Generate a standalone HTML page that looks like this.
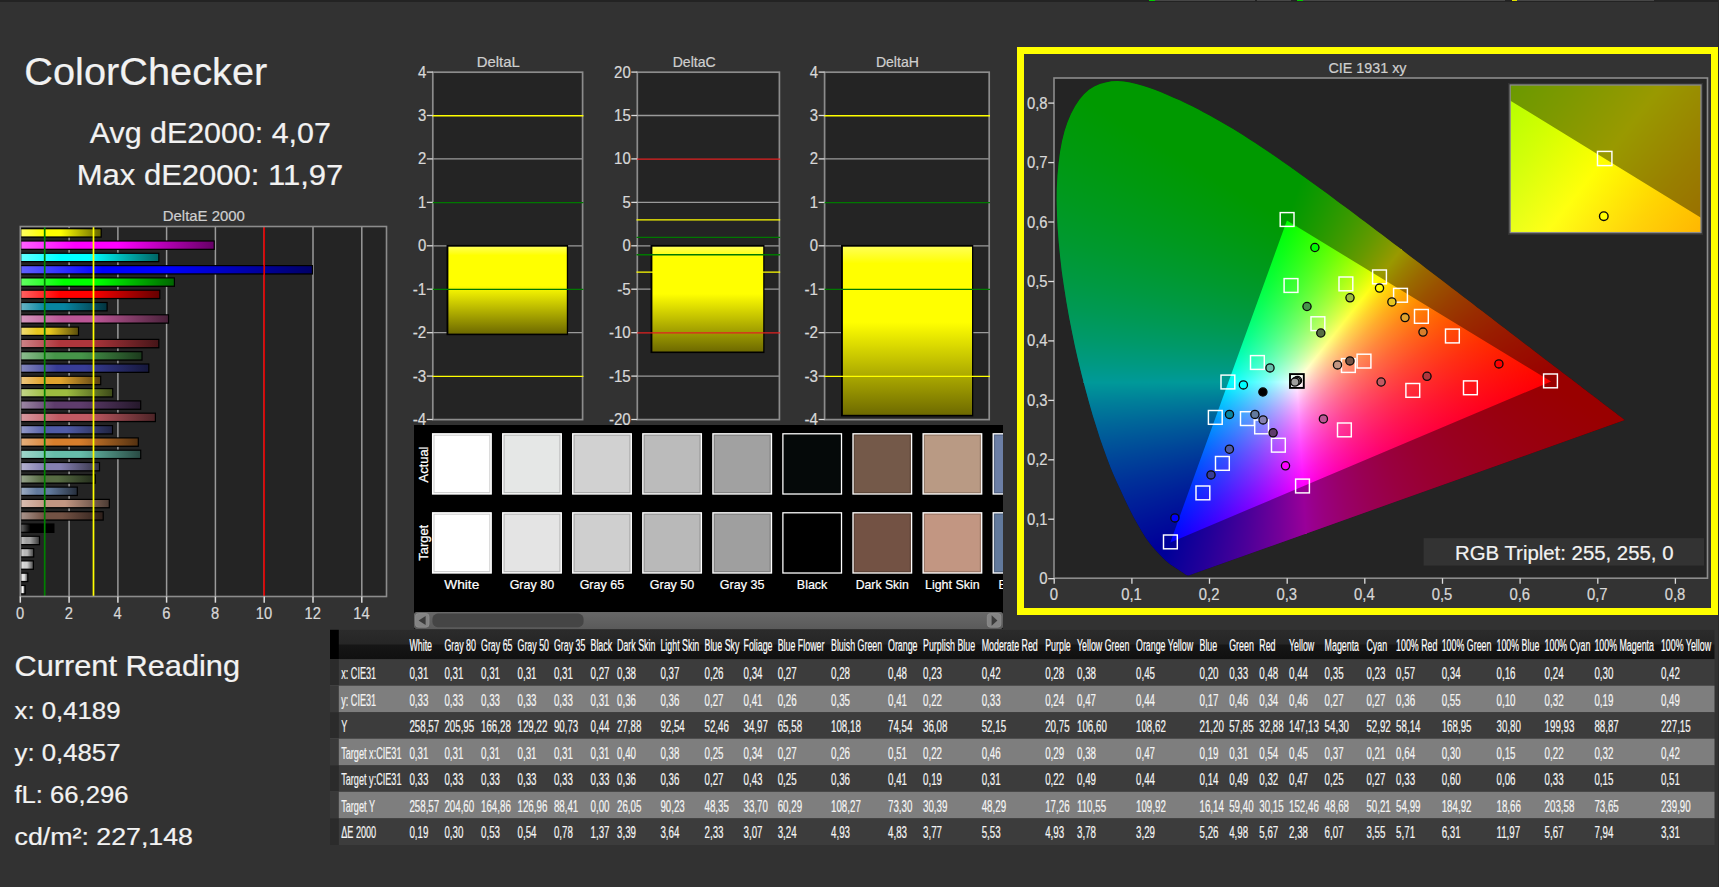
<!DOCTYPE html>
<html lang="en"><head><meta charset="utf-8">
<title>ColorChecker</title>
<style>
html,body{margin:0;padding:0}
body{width:1719px;height:887px;overflow:hidden;position:relative;background:#323232;
 font-family:"Liberation Sans", sans-serif;color:#f2f2f2}
.a{position:absolute}
svg text{font-family:"Liberation Sans", sans-serif;stroke-width:.22px}
</style></head><body>
<div class="a" style="left:0;top:0;width:1719px;height:2px;background:#232323"></div>
<div class="a" style="left:1149px;top:0;width:106px;height:1px;background:#474747"></div>
<div class="a" style="left:1257px;top:0;width:34px;height:1px;background:#474747"></div>
<div class="a" style="left:1297px;top:0;width:208px;height:1px;background:#474747"></div>
<div class="a" style="left:1512px;top:0;width:142px;height:1px;background:#474747"></div>
<div class="a" style="left:1149px;top:0;width:6px;height:1px;background:#00d000"></div>
<div class="a" style="left:1297px;top:0;width:6px;height:1px;background:#00d000"></div>
<div class="a" style="left:1512px;top:0;width:5px;height:1px;background:#e0e000"></div>
<div class="a" style="left:1017px;top:47px;width:701px;height:568px;box-sizing:border-box;border:7px solid #ffff00;background:#333"></div>
<div class="a" style="left:1718px;top:0;width:1px;height:887px;background:#2a2a2a"></div>
<div class="a" style="left:1054.0px;top:78.0px;width:653.5px;height:500.20000000000005px;overflow:hidden;background:#242424">
<div class="a" style="left:0;top:0;width:653.5px;height:500.20000000000005px;clip-path:polygon(135.1px 497.2px,135.0px 497.2px,135.0px 497.2px,135.0px 497.3px,134.9px 497.3px,134.8px 497.3px,134.8px 497.3px,134.7px 497.3px,134.6px 497.3px,134.5px 497.3px,134.5px 497.3px,134.4px 497.3px,134.3px 497.4px,134.2px 497.4px,134.0px 497.4px,133.9px 497.3px,133.8px 497.3px,133.6px 497.3px,133.4px 497.3px,133.2px 497.3px,133.0px 497.2px,132.7px 497.0px,132.3px 496.9px,132.0px 496.7px,131.5px 496.4px,131.0px 496.1px,130.5px 495.7px,129.9px 495.3px,129.2px 494.8px,128.4px 494.3px,127.5px 493.7px,126.6px 493.0px,125.5px 492.4px,124.3px 491.6px,123.0px 490.7px,121.5px 489.7px,119.8px 488.6px,118.1px 487.5px,116.2px 486.2px,114.1px 484.6px,111.7px 482.5px,108.9px 479.8px,105.7px 476.5px,102.4px 472.9px,99.1px 469.3px,96.2px 465.8px,93.8px 462.5px,91.6px 459.4px,89.5px 456.1px,87.3px 452.6px,85.0px 448.5px,82.4px 443.9px,79.6px 438.9px,76.8px 433.5px,73.8px 427.6px,70.7px 421.1px,67.5px 414.1px,64.0px 406.6px,60.4px 398.6px,56.8px 389.9px,53.2px 380.6px,49.6px 370.6px,45.9px 359.9px,42.3px 348.6px,38.6px 336.8px,35.1px 324.4px,31.5px 311.3px,27.9px 297.6px,24.4px 283.3px,21.1px 268.8px,18.1px 254.2px,15.2px 239.5px,12.5px 224.3px,10.1px 209.1px,7.9px 194.0px,6.2px 179.3px,4.8px 164.9px,3.7px 150.6px,3.0px 136.5px,2.7px 122.9px,2.8px 109.9px,3.5px 97.4px,4.6px 85.3px,6.1px 73.8px,8.1px 63.0px,10.6px 53.1px,13.6px 44.1px,17.1px 35.8px,21.1px 28.3px,25.4px 21.8px,30.0px 16.2px,35.0px 11.8px,40.3px 8.5px,45.9px 6.0px,51.7px 4.4px,57.5px 3.3px,63.5px 2.9px,69.7px 3.4px,75.9px 4.6px,82.2px 6.1px,88.5px 7.8px,94.8px 9.7px,101.2px 12.0px,107.5px 14.5px,113.8px 17.2px,120.0px 19.9px,126.1px 22.6px,132.1px 25.4px,138.0px 28.3px,143.9px 31.3px,149.7px 34.4px,155.5px 37.5px,161.2px 40.7px,166.9px 43.9px,172.5px 47.3px,178.2px 50.6px,183.9px 54.1px,189.5px 57.6px,195.1px 61.2px,200.7px 64.8px,206.3px 68.5px,211.9px 72.2px,217.5px 76.0px,223.0px 79.8px,228.6px 83.7px,234.1px 87.6px,239.7px 91.5px,245.2px 95.5px,250.8px 99.5px,256.3px 103.5px,261.9px 107.5px,267.4px 111.6px,273.0px 115.6px,278.6px 119.7px,284.1px 123.9px,289.7px 128.0px,295.2px 132.1px,300.8px 136.3px,306.3px 140.5px,311.8px 144.6px,317.4px 148.8px,322.9px 153.0px,328.4px 157.1px,333.9px 161.3px,339.4px 165.5px,344.9px 169.6px,350.3px 173.7px,355.7px 177.9px,361.1px 182.0px,366.5px 186.1px,371.8px 190.2px,377.1px 194.2px,382.4px 198.2px,387.7px 202.3px,392.9px 206.2px,398.0px 210.2px,403.1px 214.1px,408.2px 218.0px,413.2px 221.8px,418.2px 225.6px,423.1px 229.4px,428.0px 233.1px,432.8px 236.7px,437.5px 240.3px,442.2px 243.9px,446.7px 247.4px,451.2px 250.8px,455.6px 254.2px,459.9px 257.5px,464.2px 260.7px,468.3px 263.9px,472.2px 266.9px,476.1px 269.8px,479.8px 272.7px,483.4px 275.5px,487.0px 278.2px,490.5px 280.9px,493.9px 283.5px,497.2px 286.0px,500.4px 288.4px,503.5px 290.8px,506.4px 293.0px,509.2px 295.2px,512.0px 297.2px,514.6px 299.2px,517.1px 301.1px,519.5px 303.0px,521.9px 304.8px,524.1px 306.5px,526.2px 308.1px,528.2px 309.7px,530.2px 311.2px,532.0px 312.6px,533.8px 313.9px,535.5px 315.2px,537.1px 316.5px,538.6px 317.6px,540.1px 318.8px,541.5px 319.8px,542.9px 320.8px,544.2px 321.8px,545.4px 322.8px,546.6px 323.7px,547.7px 324.5px,548.8px 325.4px,549.8px 326.2px,550.9px 327.0px,551.8px 327.7px,552.8px 328.4px,553.7px 329.1px,554.6px 329.8px,555.4px 330.4px,556.1px 331.0px,556.8px 331.5px,557.6px 332.1px,558.5px 332.8px,559.4px 333.5px,560.5px 334.3px,561.6px 335.1px,562.7px 336.0px,563.9px 336.9px,565.3px 337.9px,566.8px 339.1px,568.4px 340.3px,569.7px 341.4px,570.7px 342.1px);background:#000;isolation:isolate">
<div class="a" style="left:0;top:0;width:653.5px;height:500.20000000000005px;clip-path:polygon(242.8px 305.3px,-3757.1px 314.7px,-1.1px -3687.2px,2719.6px -2835.7px);background:conic-gradient(from 218.26deg at 116.3px 464.4px,rgb(255,0,0) 0.00deg,rgb(255,0,0) 28.75deg,rgb(0,0,0) 29.00deg,rgb(0,0,0) 161.50deg,rgb(15,0,0) 163.25deg,rgb(49,0,0) 166.50deg,rgb(78,0,0) 169.00deg,rgb(110,0,0) 171.50deg,rgb(139,0,0) 173.50deg,rgb(170,0,0) 175.50deg,rgb(210,0,0) 177.75deg,rgb(255,0,0) 180.00deg,rgb(255,0,0) 180.25deg,rgb(255,0,0) 208.75deg,rgb(0,0,0) 209.00deg,rgb(0,0,0) 300.00deg,rgb(1,0,0) 341.75deg,rgb(28,0,0) 344.50deg,rgb(57,0,0) 347.25deg,rgb(87,0,0) 349.75deg,rgb(117,0,0) 352.00deg,rgb(150,0,0) 354.25deg,rgb(183,0,0) 356.25deg,rgb(219,0,0) 358.25deg,rgb(255,0,0) 360.00deg),conic-gradient(from 89.87deg at 497.1px 303.5px,rgb(0,0,255) 0.00deg,rgb(0,0,215) 2.50deg,rgb(0,0,175) 5.50deg,rgb(0,0,140) 8.75deg,rgb(0,0,109) 12.25deg,rgb(0,0,79) 16.25deg,rgb(0,0,51) 20.75deg,rgb(0,0,25) 25.75deg,rgb(0,0,0) 31.50deg,rgb(0,0,0) 157.00deg,rgb(0,0,255) 157.25deg,rgb(0,0,255) 180.00deg,rgb(0,0,215) 182.50deg,rgb(0,0,175) 185.50deg,rgb(0,0,140) 188.75deg,rgb(0,0,109) 192.25deg,rgb(0,0,79) 196.25deg,rgb(0,0,51) 200.75deg,rgb(0,0,25) 205.75deg,rgb(0,0,0) 211.50deg,rgb(0,0,0) 337.00deg,rgb(0,0,255) 337.25deg,rgb(0,0,255) 360.00deg),#0f0;background-blend-mode:screen,screen,normal"></div>
<div class="a" style="left:0;top:0;width:653.5px;height:500.20000000000005px;clip-path:polygon(241.6px 304.1px,2718.3px -2836.9px,4241.6px 294.7px,485.5px 4296.7px);background:conic-gradient(from 218.26deg at 116.3px 464.4px,rgb(0,255,0) 0.00deg,rgb(0,212,0) 2.25deg,rgb(0,170,0) 5.00deg,rgb(0,133,0) 8.00deg,rgb(0,102,0) 11.25deg,rgb(0,72,0) 15.00deg,rgb(0,45,0) 19.25deg,rgb(0,20,0) 24.25deg,rgb(0,0,0) 29.00deg,rgb(0,0,0) 161.50deg,rgb(0,255,0) 161.75deg,rgb(0,255,0) 180.00deg,rgb(0,212,0) 182.25deg,rgb(0,173,0) 184.75deg,rgb(0,136,0) 187.75deg,rgb(0,104,0) 191.00deg,rgb(0,74,0) 194.75deg,rgb(0,48,0) 198.75deg,rgb(0,23,0) 203.50deg,rgb(0,0,0) 208.75deg,rgb(0,0,0) 341.50deg,rgb(0,255,0) 341.75deg,rgb(0,255,0) 360.00deg),conic-gradient(from 356.50deg at 232.9px 142.6px,rgb(0,0,255) 0.00deg,rgb(0,0,255) 23.25deg,rgb(0,0,0) 23.50deg,rgb(0,0,0) 125.00deg,rgb(0,0,28) 136.75deg,rgb(0,0,54) 146.25deg,rgb(0,0,80) 154.25deg,rgb(0,0,108) 161.00deg,rgb(0,0,140) 167.00deg,rgb(0,0,174) 172.00deg,rgb(0,0,211) 176.25deg,rgb(0,0,233) 178.25deg,rgb(0,0,255) 180.00deg,rgb(0,0,255) 203.25deg,rgb(0,0,0) 203.50deg,rgb(0,0,0) 304.75deg,rgb(0,0,26) 316.25deg,rgb(0,0,53) 326.00deg,rgb(0,0,79) 334.00deg,rgb(0,0,107) 340.75deg,rgb(0,0,138) 346.75deg,rgb(0,0,172) 351.75deg,rgb(0,0,190) 354.00deg,rgb(0,0,211) 356.25deg,rgb(0,0,233) 358.25deg,rgb(0,0,255) 360.00deg),#f00;background-blend-mode:screen,screen,normal"></div>
<div class="a" style="left:0;top:0;width:653.5px;height:500.20000000000005px;clip-path:polygon(243.5px 303.2px,487.4px 4295.7px,-2233.2px 3444.2px,-3756.5px 312.5px);background:conic-gradient(from 356.50deg at 232.9px 142.6px,rgb(255,0,0) 0.00deg,rgb(192,0,0) 5.00deg,rgb(129,0,0) 10.50deg,rgb(59,0,0) 17.25deg,rgb(0,0,0) 23.50deg,rgb(0,0,0) 124.75deg,rgb(255,0,0) 125.00deg,rgb(255,0,0) 180.00deg,rgb(192,0,0) 185.00deg,rgb(129,0,0) 190.50deg,rgb(59,0,0) 197.25deg,rgb(0,0,0) 203.50deg,rgb(0,0,0) 301.25deg,rgb(0,0,0) 304.75deg,rgb(255,0,0) 305.00deg,rgb(255,0,0) 360.00deg),conic-gradient(from 89.87deg at 497.1px 303.5px,rgb(0,255,0) 0.00deg,rgb(0,255,0) 31.25deg,rgb(0,0,0) 31.50deg,rgb(0,0,0) 157.25deg,rgb(0,27,0) 160.75deg,rgb(0,55,0) 164.00deg,rgb(0,83,0) 167.00deg,rgb(0,115,0) 170.00deg,rgb(0,144,0) 172.50deg,rgb(0,173,0) 174.75deg,rgb(0,213,0) 177.50deg,rgb(0,255,0) 180.00deg,rgb(0,255,0) 180.25deg,rgb(0,255,0) 211.25deg,rgb(0,0,0) 211.50deg,rgb(0,0,0) 337.25deg,rgb(0,29,0) 341.00deg,rgb(0,57,0) 344.25deg,rgb(0,86,0) 347.25deg,rgb(0,118,0) 350.25deg,rgb(0,150,0) 353.00deg,rgb(0,184,0) 355.50deg,rgb(0,217,0) 357.75deg,rgb(0,255,0) 360.00deg),#00f;background-blend-mode:screen,screen,normal"></div>
<div class="a" style="left:0;top:0;width:653.5px;height:500.20000000000005px;background:rgba(0,0,0,.4);clip-path:path(evenodd,'M-10 -10H663.5V510.20000000000005H-10Z M497.1 303.5 232.9 142.6 116.3 464.4Z')"></div>
</div></div>
<div class="a" style="left:1508.0px;top:82.8px;width:195.20000000000002px;height:152.0px;background:#333"></div>
<div class="a" style="left:1510.2px;top:85.0px;width:190.8px;height:147.6px;overflow:hidden;background:#242424">
<div class="a" style="left:0;top:0;width:190.8px;height:147.6px;background:#000;isolation:isolate">
<div class="a" style="left:0;top:0;width:190.8px;height:147.6px;clip-path:polygon(-312.2px 595.1px,-4312.2px 604.6px,-554.1px -3397.5px,2151.6px -2556.0px);background:conic-gradient(from 218.02deg at -933.1px 1388.0px,rgb(255,0,0) 0.00deg,rgb(255,0,0) 28.75deg,rgb(0,0,0) 29.00deg,rgb(0,0,0) 161.75deg,rgb(54,0,0) 167.00deg,rgb(84,0,0) 169.50deg,rgb(113,0,0) 171.75deg,rgb(142,0,0) 173.75deg,rgb(170,0,0) 175.50deg,rgb(210,0,0) 177.75deg,rgb(255,0,0) 180.00deg,rgb(255,0,0) 180.25deg,rgb(255,0,0) 208.75deg,rgb(0,0,0) 209.00deg,rgb(0,0,0) 341.75deg,rgb(27,0,0) 344.50deg,rgb(57,0,0) 347.25deg,rgb(87,0,0) 349.75deg,rgb(117,0,0) 352.00deg,rgb(150,0,0) 354.25deg,rgb(183,0,0) 356.25deg,rgb(219,0,0) 358.25deg,rgb(255,0,0) 360.00deg),conic-gradient(from 89.86deg at 936.7px 591.0px,rgb(0,0,255) 0.00deg,rgb(0,0,215) 2.50deg,rgb(0,0,175) 5.50deg,rgb(0,0,140) 8.75deg,rgb(0,0,107) 12.50deg,rgb(0,0,78) 16.50deg,rgb(0,0,51) 21.00deg,rgb(0,0,24) 26.25deg,rgb(0,0,0) 31.75deg,rgb(0,0,0) 157.00deg,rgb(0,0,255) 157.25deg,rgb(0,0,255) 180.00deg,rgb(0,0,215) 182.50deg,rgb(0,0,175) 185.50deg,rgb(0,0,140) 188.75deg,rgb(0,0,107) 192.50deg,rgb(0,0,78) 196.50deg,rgb(0,0,51) 201.00deg,rgb(0,0,24) 206.25deg,rgb(0,0,0) 211.75deg,rgb(0,0,0) 337.00deg,rgb(0,0,255) 337.25deg,rgb(0,0,255) 360.00deg),#0f0;background-blend-mode:screen,screen,normal"></div>
<div class="a" style="left:0;top:0;width:190.8px;height:147.6px;clip-path:polygon(-313.5px 593.9px,2150.3px -2557.2px,3686.5px 584.5px,-71.6px 4586.6px);background:conic-gradient(from 218.02deg at -933.1px 1388.0px,rgb(0,255,0) 0.00deg,rgb(0,212,0) 2.25deg,rgb(0,173,0) 4.75deg,rgb(0,136,0) 7.75deg,rgb(0,104,0) 11.00deg,rgb(0,74,0) 14.75deg,rgb(0,47,0) 19.00deg,rgb(0,21,0) 24.00deg,rgb(0,0,0) 29.00deg,rgb(0,0,0) 161.50deg,rgb(0,255,0) 161.75deg,rgb(0,255,0) 180.00deg,rgb(0,212,0) 182.25deg,rgb(0,173,0) 184.75deg,rgb(0,136,0) 187.75deg,rgb(0,104,0) 191.00deg,rgb(0,74,0) 194.75deg,rgb(0,47,0) 199.00deg,rgb(0,21,0) 204.00deg,rgb(0,0,0) 209.00deg,rgb(0,0,0) 341.50deg,rgb(0,255,0) 341.75deg,rgb(0,255,0) 360.00deg),conic-gradient(from 356.53deg at -360.7px -206.1px,rgb(0,0,255) 0.00deg,rgb(0,0,255) 23.00deg,rgb(0,0,0) 23.25deg,rgb(0,0,0) 125.00deg,rgb(0,0,27) 136.75deg,rgb(0,0,53) 146.25deg,rgb(0,0,79) 154.25deg,rgb(0,0,107) 161.00deg,rgb(0,0,139) 167.00deg,rgb(0,0,173) 172.00deg,rgb(0,0,211) 176.25deg,rgb(0,0,233) 178.25deg,rgb(0,0,255) 180.00deg,rgb(0,0,255) 203.00deg,rgb(0,0,0) 203.25deg,rgb(0,0,0) 305.00deg,rgb(0,0,27) 316.75deg,rgb(0,0,53) 326.25deg,rgb(0,0,79) 334.25deg,rgb(0,0,107) 341.00deg,rgb(0,0,139) 347.00deg,rgb(0,0,173) 352.00deg,rgb(0,0,211) 356.25deg,rgb(0,0,233) 358.25deg,rgb(0,0,255) 360.00deg),#f00;background-blend-mode:screen,screen,normal"></div>
<div class="a" style="left:0;top:0;width:190.8px;height:147.6px;clip-path:polygon(-311.5px 593.0px,-69.7px 4585.7px,-2775.3px 3744.2px,-4311.5px 602.4px);background:conic-gradient(from 356.53deg at -360.7px -206.1px,rgb(255,0,0) 0.00deg,rgb(194,0,0) 4.75deg,rgb(131,0,0) 10.25deg,rgb(65,0,0) 16.50deg,rgb(0,0,0) 23.25deg,rgb(0,0,0) 125.00deg,rgb(255,0,0) 125.25deg,rgb(255,0,0) 180.00deg,rgb(194,0,0) 184.75deg,rgb(131,0,0) 190.25deg,rgb(65,0,0) 196.50deg,rgb(0,0,0) 203.25deg,rgb(0,0,0) 305.00deg,rgb(255,0,0) 305.25deg,rgb(255,0,0) 360.00deg),conic-gradient(from 89.86deg at 936.7px 591.0px,rgb(0,255,0) 0.00deg,rgb(0,255,0) 31.50deg,rgb(0,0,0) 31.75deg,rgb(0,0,0) 157.00deg,rgb(0,24,0) 160.25deg,rgb(0,54,0) 163.75deg,rgb(0,82,0) 166.75deg,rgb(0,113,0) 169.75deg,rgb(0,142,0) 172.25deg,rgb(0,174,0) 174.75deg,rgb(0,214,0) 177.50deg,rgb(0,255,0) 180.00deg,rgb(0,255,0) 180.25deg,rgb(0,255,0) 211.50deg,rgb(0,0,0) 211.75deg,rgb(0,0,0) 337.00deg,rgb(0,24,0) 340.25deg,rgb(0,54,0) 343.75deg,rgb(0,84,0) 347.00deg,rgb(0,116,0) 350.00deg,rgb(0,148,0) 352.75deg,rgb(0,181,0) 355.25deg,rgb(0,217,0) 357.75deg,rgb(0,255,0) 360.00deg),#00f;background-blend-mode:screen,screen,normal"></div>
<div class="a" style="left:0;top:0;width:190.8px;height:147.6px;background:rgba(0,0,0,.4);clip-path:path(evenodd,'M-10 -10H200.8V157.6H-10Z M936.7 591.0 -360.7 -206.1 -933.1 1388.0Z')"></div>
</div></div>
<svg class="a" style="left:0;top:0" width="1719" height="887" viewBox="0 0 1719 887">
<text x="24.3" y="84.9" font-size="39.5" fill="#f2f2f2" stroke="#f2f2f2" text-anchor="start" textLength="243.0" lengthAdjust="spacingAndGlyphs">ColorChecker</text>
<text x="89.8" y="143.2" font-size="30.3" fill="#f2f2f2" stroke="#f2f2f2" text-anchor="start" textLength="241.0" lengthAdjust="spacingAndGlyphs">Avg dE2000: 4,07</text>
<text x="76.8" y="185.0" font-size="30.3" fill="#f2f2f2" stroke="#f2f2f2" text-anchor="start" textLength="266.5" lengthAdjust="spacingAndGlyphs">Max dE2000: 11,97</text>
<text x="203.8" y="220.8" font-size="15" fill="#cfcfcf" stroke="#cfcfcf" text-anchor="middle" textLength="82.0" lengthAdjust="spacingAndGlyphs">DeltaE 2000</text>
<text x="14.5" y="675.7" font-size="28.6" fill="#f2f2f2" stroke="#f2f2f2" text-anchor="start" textLength="225.5" lengthAdjust="spacingAndGlyphs">Current Reading</text>
<text x="14.5" y="718.8" font-size="24.4" fill="#f2f2f2" stroke="#f2f2f2" text-anchor="start" textLength="106.0" lengthAdjust="spacingAndGlyphs">x: 0,4189</text>
<text x="14.5" y="760.6" font-size="24.4" fill="#f2f2f2" stroke="#f2f2f2" text-anchor="start" textLength="106.0" lengthAdjust="spacingAndGlyphs">y: 0,4857</text>
<text x="14.5" y="802.8" font-size="24.4" fill="#f2f2f2" stroke="#f2f2f2" text-anchor="start" textLength="114.0" lengthAdjust="spacingAndGlyphs">fL: 66,296</text>
<text x="14.5" y="844.6" font-size="24.4" fill="#f2f2f2" stroke="#f2f2f2" text-anchor="start" textLength="178.5" lengthAdjust="spacingAndGlyphs">cd/m²: 227,148</text>
<defs><linearGradient id="b0"><stop offset="0" stop-color="rgb(255, 255, 255)"/><stop offset=".28" stop-color="rgb(255, 255, 255)"/><stop offset=".5" stop-color="rgb(255, 255, 255)"/><stop offset="1" stop-color="rgb(102, 102, 102)"/></linearGradient><linearGradient id="b1"><stop offset="0" stop-color="rgb(238, 238, 238)"/><stop offset=".28" stop-color="rgb(228, 228, 228)"/><stop offset=".5" stop-color="rgb(228, 228, 228)"/><stop offset="1" stop-color="rgb(91, 91, 91)"/></linearGradient><linearGradient id="b2"><stop offset="0" stop-color="rgb(225, 225, 225)"/><stop offset=".28" stop-color="rgb(207, 207, 207)"/><stop offset=".5" stop-color="rgb(207, 207, 207)"/><stop offset="1" stop-color="rgb(82, 82, 82)"/></linearGradient><linearGradient id="b3"><stop offset="0" stop-color="rgb(211, 211, 211)"/><stop offset=".28" stop-color="rgb(185, 185, 185)"/><stop offset=".5" stop-color="rgb(185, 185, 185)"/><stop offset="1" stop-color="rgb(74, 74, 74)"/></linearGradient><linearGradient id="b4"><stop offset="0" stop-color="rgb(195, 195, 195)"/><stop offset=".28" stop-color="rgb(159, 159, 159)"/><stop offset=".5" stop-color="rgb(159, 159, 159)"/><stop offset="1" stop-color="rgb(63, 63, 63)"/></linearGradient><linearGradient id="b5"><stop offset="0" stop-color="rgb(96, 96, 96)"/><stop offset=".28" stop-color="rgb(0, 0, 0)"/><stop offset=".5" stop-color="rgb(0, 0, 0)"/><stop offset="1" stop-color="rgb(0, 0, 0)"/></linearGradient><linearGradient id="b6"><stop offset="0" stop-color="rgb(168, 147, 139)"/><stop offset=".28" stop-color="rgb(115, 82, 68)"/><stop offset=".5" stop-color="rgb(115, 82, 68)"/><stop offset="1" stop-color="rgb(46, 32, 27)"/></linearGradient><linearGradient id="b7"><stop offset="0" stop-color="rgb(217, 189, 177)"/><stop offset=".28" stop-color="rgb(194, 150, 130)"/><stop offset=".5" stop-color="rgb(194, 150, 130)"/><stop offset="1" stop-color="rgb(77, 60, 52)"/></linearGradient><linearGradient id="b8"><stop offset="0" stop-color="rgb(157, 172, 194)"/><stop offset=".28" stop-color="rgb(98, 122, 157)"/><stop offset=".5" stop-color="rgb(98, 122, 157)"/><stop offset="1" stop-color="rgb(39, 48, 62)"/></linearGradient><linearGradient id="b9"><stop offset="0" stop-color="rgb(150, 163, 138)"/><stop offset=".28" stop-color="rgb(87, 108, 67)"/><stop offset=".5" stop-color="rgb(87, 108, 67)"/><stop offset="1" stop-color="rgb(34, 43, 26)"/></linearGradient><linearGradient id="b10"><stop offset="0" stop-color="rgb(179, 176, 206)"/><stop offset=".28" stop-color="rgb(133, 128, 177)"/><stop offset=".5" stop-color="rgb(133, 128, 177)"/><stop offset="1" stop-color="rgb(53, 51, 70)"/></linearGradient><linearGradient id="b11"><stop offset="0" stop-color="rgb(160, 214, 202)"/><stop offset=".28" stop-color="rgb(103, 189, 170)"/><stop offset=".5" stop-color="rgb(103, 189, 170)"/><stop offset="1" stop-color="rgb(41, 75, 68)"/></linearGradient><linearGradient id="b12"><stop offset="0" stop-color="rgb(229, 175, 124)"/><stop offset=".28" stop-color="rgb(214, 126, 44)"/><stop offset=".5" stop-color="rgb(214, 126, 44)"/><stop offset="1" stop-color="rgb(85, 50, 17)"/></linearGradient><linearGradient id="b13"><stop offset="0" stop-color="rgb(146, 153, 199)"/><stop offset=".28" stop-color="rgb(80, 91, 166)"/><stop offset=".5" stop-color="rgb(80, 91, 166)"/><stop offset="1" stop-color="rgb(32, 36, 66)"/></linearGradient><linearGradient id="b14"><stop offset="0" stop-color="rgb(216, 152, 158)"/><stop offset=".28" stop-color="rgb(193, 90, 99)"/><stop offset=".5" stop-color="rgb(193, 90, 99)"/><stop offset="1" stop-color="rgb(77, 36, 39)"/></linearGradient><linearGradient id="b15"><stop offset="0" stop-color="rgb(155, 134, 163)"/><stop offset=".28" stop-color="rgb(94, 60, 108)"/><stop offset=".5" stop-color="rgb(94, 60, 108)"/><stop offset="1" stop-color="rgb(37, 24, 43)"/></linearGradient><linearGradient id="b16"><stop offset="0" stop-color="rgb(194, 213, 136)"/><stop offset=".28" stop-color="rgb(157, 188, 64)"/><stop offset=".5" stop-color="rgb(157, 188, 64)"/><stop offset="1" stop-color="rgb(62, 75, 25)"/></linearGradient><linearGradient id="b17"><stop offset="0" stop-color="rgb(235, 197, 125)"/><stop offset=".28" stop-color="rgb(224, 163, 46)"/><stop offset=".5" stop-color="rgb(224, 163, 46)"/><stop offset="1" stop-color="rgb(89, 65, 18)"/></linearGradient><linearGradient id="b18"><stop offset="0" stop-color="rgb(131, 134, 189)"/><stop offset=".28" stop-color="rgb(56, 61, 150)"/><stop offset=".5" stop-color="rgb(56, 61, 150)"/><stop offset="1" stop-color="rgb(22, 24, 60)"/></linearGradient><linearGradient id="b19"><stop offset="0" stop-color="rgb(140, 188, 142)"/><stop offset=".28" stop-color="rgb(70, 148, 73)"/><stop offset=".5" stop-color="rgb(70, 148, 73)"/><stop offset="1" stop-color="rgb(28, 59, 29)"/></linearGradient><linearGradient id="b20"><stop offset="0" stop-color="rgb(205, 130, 134)"/><stop offset=".28" stop-color="rgb(175, 54, 60)"/><stop offset=".5" stop-color="rgb(175, 54, 60)"/><stop offset="1" stop-color="rgb(70, 21, 24)"/></linearGradient><linearGradient id="b21"><stop offset="0" stop-color="rgb(240, 220, 116)"/><stop offset=".28" stop-color="rgb(231, 199, 31)"/><stop offset=".5" stop-color="rgb(231, 199, 31)"/><stop offset="1" stop-color="rgb(92, 79, 12)"/></linearGradient><linearGradient id="b22"><stop offset="0" stop-color="rgb(212, 150, 189)"/><stop offset=".28" stop-color="rgb(187, 86, 149)"/><stop offset=".5" stop-color="rgb(187, 86, 149)"/><stop offset="1" stop-color="rgb(74, 34, 59)"/></linearGradient><linearGradient id="b23"><stop offset="0" stop-color="rgb(101, 179, 196)"/><stop offset=".28" stop-color="rgb(8, 133, 161)"/><stop offset=".5" stop-color="rgb(8, 133, 161)"/><stop offset="1" stop-color="rgb(3, 53, 64)"/></linearGradient><linearGradient id="b24"><stop offset="0" stop-color="rgb(255, 96, 96)"/><stop offset=".28" stop-color="rgb(255, 0, 0)"/><stop offset=".5" stop-color="rgb(255, 0, 0)"/><stop offset="1" stop-color="rgb(102, 0, 0)"/></linearGradient><linearGradient id="b25"><stop offset="0" stop-color="rgb(96, 255, 96)"/><stop offset=".28" stop-color="rgb(0, 255, 0)"/><stop offset=".5" stop-color="rgb(0, 255, 0)"/><stop offset="1" stop-color="rgb(0, 102, 0)"/></linearGradient><linearGradient id="b26"><stop offset="0" stop-color="rgb(96, 96, 255)"/><stop offset=".28" stop-color="rgb(0, 0, 255)"/><stop offset=".5" stop-color="rgb(0, 0, 255)"/><stop offset="1" stop-color="rgb(0, 0, 102)"/></linearGradient><linearGradient id="b27"><stop offset="0" stop-color="rgb(96, 255, 255)"/><stop offset=".28" stop-color="rgb(0, 255, 255)"/><stop offset=".5" stop-color="rgb(0, 255, 255)"/><stop offset="1" stop-color="rgb(0, 102, 102)"/></linearGradient><linearGradient id="b28"><stop offset="0" stop-color="rgb(255, 96, 255)"/><stop offset=".28" stop-color="rgb(255, 0, 255)"/><stop offset=".5" stop-color="rgb(255, 0, 255)"/><stop offset="1" stop-color="rgb(102, 0, 102)"/></linearGradient><linearGradient id="b29"><stop offset="0" stop-color="rgb(255, 255, 96)"/><stop offset=".28" stop-color="rgb(255, 255, 0)"/><stop offset=".5" stop-color="rgb(255, 255, 0)"/><stop offset="1" stop-color="rgb(102, 102, 0)"/></linearGradient></defs><rect x="20.3" y="226.5" width="366.2" height="370.0" fill="#242424"/>
<line x1="69.1" y1="226.5" x2="69.1" y2="596.5" stroke="#9a9a9a" stroke-width="1.5"/>
<line x1="117.9" y1="226.5" x2="117.9" y2="596.5" stroke="#9a9a9a" stroke-width="1.5"/>
<line x1="166.6" y1="226.5" x2="166.6" y2="596.5" stroke="#9a9a9a" stroke-width="1.5"/>
<line x1="215.4" y1="226.5" x2="215.4" y2="596.5" stroke="#9a9a9a" stroke-width="1.5"/>
<line x1="264.2" y1="226.5" x2="264.2" y2="596.5" stroke="#9a9a9a" stroke-width="1.5"/>
<line x1="313.0" y1="226.5" x2="313.0" y2="596.5" stroke="#9a9a9a" stroke-width="1.5"/>
<line x1="361.8" y1="226.5" x2="361.8" y2="596.5" stroke="#9a9a9a" stroke-width="1.5"/>
<rect x="20.8" y="584.9" width="4.9" height="9.6" fill="#000"/>
<rect x="21.3" y="586.1" width="3.2" height="7.1" fill="url(#b0)"/>
<rect x="20.8" y="572.6" width="7.6" height="9.6" fill="#000"/>
<rect x="21.3" y="573.8" width="5.9" height="7.1" fill="url(#b1)"/>
<rect x="20.8" y="560.3" width="13.2" height="9.6" fill="#000"/>
<rect x="21.3" y="561.5" width="11.5" height="7.1" fill="url(#b2)"/>
<rect x="20.8" y="548.0" width="13.5" height="9.6" fill="#000"/>
<rect x="21.3" y="549.2" width="11.8" height="7.1" fill="url(#b3)"/>
<rect x="20.8" y="535.7" width="19.3" height="9.6" fill="#000"/>
<rect x="21.3" y="536.9" width="17.6" height="7.1" fill="url(#b4)"/>
<rect x="20.8" y="523.4" width="33.7" height="9.6" fill="#000"/>
<rect x="21.3" y="524.6" width="32.0" height="7.1" fill="url(#b5)"/>
<rect x="20.8" y="511.1" width="83.0" height="9.6" fill="#000"/>
<rect x="21.3" y="512.3" width="81.3" height="7.1" fill="url(#b6)"/>
<rect x="20.8" y="498.8" width="89.1" height="9.6" fill="#000"/>
<rect x="21.3" y="500.0" width="87.4" height="7.1" fill="url(#b7)"/>
<rect x="20.8" y="486.5" width="57.1" height="9.6" fill="#000"/>
<rect x="21.3" y="487.7" width="55.4" height="7.1" fill="url(#b8)"/>
<rect x="20.8" y="474.2" width="75.2" height="9.6" fill="#000"/>
<rect x="21.3" y="475.4" width="73.5" height="7.1" fill="url(#b9)"/>
<rect x="20.8" y="461.9" width="79.3" height="9.6" fill="#000"/>
<rect x="21.3" y="463.1" width="77.6" height="7.1" fill="url(#b10)"/>
<rect x="20.8" y="449.6" width="120.5" height="9.6" fill="#000"/>
<rect x="21.3" y="450.8" width="118.8" height="7.1" fill="url(#b11)"/>
<rect x="20.8" y="437.3" width="118.1" height="9.6" fill="#000"/>
<rect x="21.3" y="438.5" width="116.4" height="7.1" fill="url(#b12)"/>
<rect x="20.8" y="425.0" width="92.3" height="9.6" fill="#000"/>
<rect x="21.3" y="426.2" width="90.6" height="7.1" fill="url(#b13)"/>
<rect x="20.8" y="412.6" width="135.2" height="9.6" fill="#000"/>
<rect x="21.3" y="413.8" width="133.5" height="7.1" fill="url(#b14)"/>
<rect x="20.8" y="400.3" width="120.5" height="9.6" fill="#000"/>
<rect x="21.3" y="401.5" width="118.8" height="7.1" fill="url(#b15)"/>
<rect x="20.8" y="388.0" width="92.5" height="9.6" fill="#000"/>
<rect x="21.3" y="389.2" width="90.8" height="7.1" fill="url(#b16)"/>
<rect x="20.8" y="375.7" width="80.5" height="9.6" fill="#000"/>
<rect x="21.3" y="376.9" width="78.8" height="7.1" fill="url(#b17)"/>
<rect x="20.8" y="363.4" width="128.6" height="9.6" fill="#000"/>
<rect x="21.3" y="364.6" width="126.9" height="7.1" fill="url(#b18)"/>
<rect x="20.8" y="351.1" width="121.8" height="9.6" fill="#000"/>
<rect x="21.3" y="352.3" width="120.1" height="7.1" fill="url(#b19)"/>
<rect x="20.8" y="338.8" width="138.6" height="9.6" fill="#000"/>
<rect x="21.3" y="340.0" width="136.9" height="7.1" fill="url(#b20)"/>
<rect x="20.8" y="326.5" width="58.3" height="9.6" fill="#000"/>
<rect x="21.3" y="327.7" width="56.6" height="7.1" fill="url(#b21)"/>
<rect x="20.8" y="314.2" width="148.3" height="9.6" fill="#000"/>
<rect x="21.3" y="315.4" width="146.6" height="7.1" fill="url(#b22)"/>
<rect x="20.8" y="301.9" width="86.9" height="9.6" fill="#000"/>
<rect x="21.3" y="303.1" width="85.2" height="7.1" fill="url(#b23)"/>
<rect x="20.8" y="289.6" width="139.6" height="9.6" fill="#000"/>
<rect x="21.3" y="290.8" width="137.9" height="7.1" fill="url(#b24)"/>
<rect x="20.8" y="277.3" width="154.2" height="9.6" fill="#000"/>
<rect x="21.3" y="278.5" width="152.5" height="7.1" fill="url(#b25)"/>
<rect x="20.8" y="265.0" width="292.2" height="9.6" fill="#000"/>
<rect x="21.3" y="266.2" width="290.5" height="7.1" fill="url(#b26)"/>
<rect x="20.8" y="252.7" width="138.6" height="9.6" fill="#000"/>
<rect x="21.3" y="253.9" width="136.9" height="7.1" fill="url(#b27)"/>
<rect x="20.8" y="240.4" width="194.0" height="9.6" fill="#000"/>
<rect x="21.3" y="241.6" width="192.3" height="7.1" fill="url(#b28)"/>
<rect x="20.8" y="228.1" width="81.0" height="9.6" fill="#000"/>
<rect x="21.3" y="229.3" width="79.3" height="7.1" fill="url(#b29)"/>
<line x1="44.7" y1="226.5" x2="44.7" y2="596.5" stroke="#008000" stroke-width="1.7"/>
<line x1="93.5" y1="226.5" x2="93.5" y2="596.5" stroke="#ffff00" stroke-width="1.7"/>
<line x1="264.2" y1="226.5" x2="264.2" y2="596.5" stroke="#e00000" stroke-width="1.7"/>
<rect x="20.3" y="226.5" width="366.2" height="370.0" fill="none" stroke="#8c8c8c" stroke-width="1.6"/>
<line x1="20.3" y1="596.5" x2="20.3" y2="602.7" stroke="#ddd" stroke-width="1.5"/>
<text x="20.0" y="619.0" font-size="15.7" fill="#d8d8d8" stroke="#d8d8d8" text-anchor="middle" textLength="8.2" lengthAdjust="spacingAndGlyphs">0</text>
<line x1="69.1" y1="596.5" x2="69.1" y2="602.7" stroke="#ddd" stroke-width="1.5"/>
<text x="68.8" y="619.0" font-size="15.7" fill="#d8d8d8" stroke="#d8d8d8" text-anchor="middle" textLength="8.2" lengthAdjust="spacingAndGlyphs">2</text>
<line x1="117.9" y1="596.5" x2="117.9" y2="602.7" stroke="#ddd" stroke-width="1.5"/>
<text x="117.6" y="619.0" font-size="15.7" fill="#d8d8d8" stroke="#d8d8d8" text-anchor="middle" textLength="8.2" lengthAdjust="spacingAndGlyphs">4</text>
<line x1="166.6" y1="596.5" x2="166.6" y2="602.7" stroke="#ddd" stroke-width="1.5"/>
<text x="166.3" y="619.0" font-size="15.7" fill="#d8d8d8" stroke="#d8d8d8" text-anchor="middle" textLength="8.2" lengthAdjust="spacingAndGlyphs">6</text>
<line x1="215.4" y1="596.5" x2="215.4" y2="602.7" stroke="#ddd" stroke-width="1.5"/>
<text x="215.1" y="619.0" font-size="15.7" fill="#d8d8d8" stroke="#d8d8d8" text-anchor="middle" textLength="8.2" lengthAdjust="spacingAndGlyphs">8</text>
<line x1="264.2" y1="596.5" x2="264.2" y2="602.7" stroke="#ddd" stroke-width="1.5"/>
<text x="263.9" y="619.0" font-size="15.7" fill="#d8d8d8" stroke="#d8d8d8" text-anchor="middle" textLength="16.4" lengthAdjust="spacingAndGlyphs">10</text>
<line x1="313.0" y1="596.5" x2="313.0" y2="602.7" stroke="#ddd" stroke-width="1.5"/>
<text x="312.7" y="619.0" font-size="15.7" fill="#d8d8d8" stroke="#d8d8d8" text-anchor="middle" textLength="16.4" lengthAdjust="spacingAndGlyphs">12</text>
<line x1="361.8" y1="596.5" x2="361.8" y2="602.7" stroke="#ddd" stroke-width="1.5"/>
<text x="361.5" y="619.0" font-size="15.7" fill="#d8d8d8" stroke="#d8d8d8" text-anchor="middle" textLength="16.4" lengthAdjust="spacingAndGlyphs">14</text>
<defs><linearGradient id="yb" x1="0" y1="0" x2="0" y2="1"><stop offset="0" stop-color="#ffff55"/><stop offset=".1" stop-color="#ffff00"/><stop offset=".45" stop-color="#ffff00"/><stop offset="1" stop-color="#6e6a00"/></linearGradient></defs>
<rect x="432.8" y="72.2" width="149.8" height="347.40000000000003" fill="#242424"/>
<line x1="432.8" y1="332.7" x2="582.6" y2="332.7" stroke="#9a9a9a" stroke-width="1.3"/>
<line x1="432.8" y1="245.8" x2="582.6" y2="245.8" stroke="#9a9a9a" stroke-width="1.3"/>
<line x1="432.8" y1="158.9" x2="582.6" y2="158.9" stroke="#9a9a9a" stroke-width="1.3"/>
<rect x="446.5" y="244.9" width="121.6" height="90.3" fill="#000"/>
<rect x="448.4" y="246.7" width="118.4" height="86.9" fill="url(#yb)"/>
<rect x="432.8" y="72.2" width="149.8" height="347.40000000000003" fill="none" stroke="#8c8c8c" stroke-width="1.7"/>
<line x1="432.0" y1="115.7" x2="583.4" y2="115.7" stroke="#ffff00" stroke-width="1.35"/>
<line x1="432.0" y1="202.6" x2="583.4" y2="202.6" stroke="#007800" stroke-width="1.35"/>
<line x1="432.0" y1="289.4" x2="583.4" y2="289.4" stroke="#007800" stroke-width="1.35"/>
<line x1="432.0" y1="376.3" x2="583.4" y2="376.3" stroke="#ffff00" stroke-width="1.35"/>
<line x1="426.8" y1="419.5" x2="432.8" y2="419.5" stroke="#ddd" stroke-width="1.3"/>
<text x="426.2" y="424.9" font-size="15.7" fill="#d8d8d8" stroke="#d8d8d8" text-anchor="end" textLength="13.5" lengthAdjust="spacingAndGlyphs">-4</text>
<line x1="426.8" y1="376.1" x2="432.8" y2="376.1" stroke="#ddd" stroke-width="1.3"/>
<text x="426.2" y="381.5" font-size="15.7" fill="#d8d8d8" stroke="#d8d8d8" text-anchor="end" textLength="13.5" lengthAdjust="spacingAndGlyphs">-3</text>
<line x1="426.8" y1="332.7" x2="432.8" y2="332.7" stroke="#ddd" stroke-width="1.3"/>
<text x="426.2" y="338.1" font-size="15.7" fill="#d8d8d8" stroke="#d8d8d8" text-anchor="end" textLength="13.5" lengthAdjust="spacingAndGlyphs">-2</text>
<line x1="426.8" y1="289.2" x2="432.8" y2="289.2" stroke="#ddd" stroke-width="1.3"/>
<text x="426.2" y="294.6" font-size="15.7" fill="#d8d8d8" stroke="#d8d8d8" text-anchor="end" textLength="13.5" lengthAdjust="spacingAndGlyphs">-1</text>
<line x1="426.8" y1="245.8" x2="432.8" y2="245.8" stroke="#ddd" stroke-width="1.3"/>
<text x="426.2" y="251.2" font-size="15.7" fill="#d8d8d8" stroke="#d8d8d8" text-anchor="end" textLength="8.3" lengthAdjust="spacingAndGlyphs">0</text>
<line x1="426.8" y1="202.4" x2="432.8" y2="202.4" stroke="#ddd" stroke-width="1.3"/>
<text x="426.2" y="207.8" font-size="15.7" fill="#d8d8d8" stroke="#d8d8d8" text-anchor="end" textLength="8.3" lengthAdjust="spacingAndGlyphs">1</text>
<line x1="426.8" y1="158.9" x2="432.8" y2="158.9" stroke="#ddd" stroke-width="1.3"/>
<text x="426.2" y="164.3" font-size="15.7" fill="#d8d8d8" stroke="#d8d8d8" text-anchor="end" textLength="8.3" lengthAdjust="spacingAndGlyphs">2</text>
<line x1="426.8" y1="115.5" x2="432.8" y2="115.5" stroke="#ddd" stroke-width="1.3"/>
<text x="426.2" y="120.9" font-size="15.7" fill="#d8d8d8" stroke="#d8d8d8" text-anchor="end" textLength="8.3" lengthAdjust="spacingAndGlyphs">3</text>
<line x1="426.8" y1="72.1" x2="432.8" y2="72.1" stroke="#ddd" stroke-width="1.3"/>
<text x="426.2" y="77.5" font-size="15.7" fill="#d8d8d8" stroke="#d8d8d8" text-anchor="end" textLength="8.3" lengthAdjust="spacingAndGlyphs">4</text>
<text x="498.3" y="67.0" font-size="15" fill="#cfcfcf" stroke="#cfcfcf" text-anchor="middle" textLength="43.0" lengthAdjust="spacingAndGlyphs">DeltaL</text>
<rect x="637.3" y="72.2" width="142.10000000000002" height="347.40000000000003" fill="#242424"/>
<line x1="637.3" y1="376.1" x2="779.4" y2="376.1" stroke="#9a9a9a" stroke-width="1.3"/>
<line x1="637.3" y1="289.2" x2="779.4" y2="289.2" stroke="#9a9a9a" stroke-width="1.3"/>
<line x1="637.3" y1="245.8" x2="779.4" y2="245.8" stroke="#9a9a9a" stroke-width="1.3"/>
<line x1="637.3" y1="202.4" x2="779.4" y2="202.4" stroke="#9a9a9a" stroke-width="1.3"/>
<line x1="637.3" y1="115.5" x2="779.4" y2="115.5" stroke="#9a9a9a" stroke-width="1.3"/>
<rect x="650.5" y="244.9" width="114.0" height="108.2" fill="#000"/>
<rect x="652.4" y="246.7" width="110.8" height="104.8" fill="url(#yb)"/>
<rect x="637.3" y="72.2" width="142.10000000000002" height="347.40000000000003" fill="none" stroke="#8c8c8c" stroke-width="1.7"/>
<line x1="636.5" y1="159.1" x2="780.1999999999999" y2="159.1" stroke="#e02020" stroke-width="1.35"/>
<line x1="636.5" y1="219.9" x2="780.1999999999999" y2="219.9" stroke="#ffff00" stroke-width="1.35"/>
<line x1="636.5" y1="237.3" x2="780.1999999999999" y2="237.3" stroke="#007800" stroke-width="1.35"/>
<line x1="636.5" y1="254.7" x2="780.1999999999999" y2="254.7" stroke="#007800" stroke-width="1.35"/>
<line x1="636.5" y1="272.1" x2="780.1999999999999" y2="272.1" stroke="#ffff00" stroke-width="1.35"/>
<line x1="636.5" y1="332.9" x2="780.1999999999999" y2="332.9" stroke="#e02020" stroke-width="1.35"/>
<line x1="631.3" y1="419.5" x2="637.3" y2="419.5" stroke="#ddd" stroke-width="1.3"/>
<text x="630.7" y="424.9" font-size="15.7" fill="#d8d8d8" stroke="#d8d8d8" text-anchor="end" textLength="21.8" lengthAdjust="spacingAndGlyphs">-20</text>
<line x1="631.3" y1="376.1" x2="637.3" y2="376.1" stroke="#ddd" stroke-width="1.3"/>
<text x="630.7" y="381.5" font-size="15.7" fill="#d8d8d8" stroke="#d8d8d8" text-anchor="end" textLength="21.8" lengthAdjust="spacingAndGlyphs">-15</text>
<line x1="631.3" y1="332.7" x2="637.3" y2="332.7" stroke="#ddd" stroke-width="1.3"/>
<text x="630.7" y="338.1" font-size="15.7" fill="#d8d8d8" stroke="#d8d8d8" text-anchor="end" textLength="21.8" lengthAdjust="spacingAndGlyphs">-10</text>
<line x1="631.3" y1="289.2" x2="637.3" y2="289.2" stroke="#ddd" stroke-width="1.3"/>
<text x="630.7" y="294.6" font-size="15.7" fill="#d8d8d8" stroke="#d8d8d8" text-anchor="end" textLength="13.5" lengthAdjust="spacingAndGlyphs">-5</text>
<line x1="631.3" y1="245.8" x2="637.3" y2="245.8" stroke="#ddd" stroke-width="1.3"/>
<text x="630.7" y="251.2" font-size="15.7" fill="#d8d8d8" stroke="#d8d8d8" text-anchor="end" textLength="8.3" lengthAdjust="spacingAndGlyphs">0</text>
<line x1="631.3" y1="202.4" x2="637.3" y2="202.4" stroke="#ddd" stroke-width="1.3"/>
<text x="630.7" y="207.8" font-size="15.7" fill="#d8d8d8" stroke="#d8d8d8" text-anchor="end" textLength="8.3" lengthAdjust="spacingAndGlyphs">5</text>
<line x1="631.3" y1="158.9" x2="637.3" y2="158.9" stroke="#ddd" stroke-width="1.3"/>
<text x="630.7" y="164.3" font-size="15.7" fill="#d8d8d8" stroke="#d8d8d8" text-anchor="end" textLength="16.6" lengthAdjust="spacingAndGlyphs">10</text>
<line x1="631.3" y1="115.5" x2="637.3" y2="115.5" stroke="#ddd" stroke-width="1.3"/>
<text x="630.7" y="120.9" font-size="15.7" fill="#d8d8d8" stroke="#d8d8d8" text-anchor="end" textLength="16.6" lengthAdjust="spacingAndGlyphs">15</text>
<line x1="631.3" y1="72.1" x2="637.3" y2="72.1" stroke="#ddd" stroke-width="1.3"/>
<text x="630.7" y="77.5" font-size="15.7" fill="#d8d8d8" stroke="#d8d8d8" text-anchor="end" textLength="16.6" lengthAdjust="spacingAndGlyphs">20</text>
<text x="694.2" y="67.0" font-size="15" fill="#cfcfcf" stroke="#cfcfcf" text-anchor="middle" textLength="43.0" lengthAdjust="spacingAndGlyphs">DeltaC</text>
<rect x="824.6" y="72.2" width="164.60000000000002" height="347.40000000000003" fill="#242424"/>
<line x1="824.6" y1="332.7" x2="989.2" y2="332.7" stroke="#9a9a9a" stroke-width="1.3"/>
<line x1="824.6" y1="245.8" x2="989.2" y2="245.8" stroke="#9a9a9a" stroke-width="1.3"/>
<line x1="824.6" y1="158.9" x2="989.2" y2="158.9" stroke="#9a9a9a" stroke-width="1.3"/>
<rect x="841.0" y="244.9" width="132.3" height="171.5" fill="#000"/>
<rect x="842.9" y="246.7" width="129.1" height="168.1" fill="url(#yb)"/>
<rect x="824.6" y="72.2" width="164.60000000000002" height="347.40000000000003" fill="none" stroke="#8c8c8c" stroke-width="1.7"/>
<line x1="823.8000000000001" y1="115.7" x2="990.0" y2="115.7" stroke="#ffff00" stroke-width="1.35"/>
<line x1="823.8000000000001" y1="202.6" x2="990.0" y2="202.6" stroke="#007800" stroke-width="1.35"/>
<line x1="823.8000000000001" y1="289.4" x2="990.0" y2="289.4" stroke="#007800" stroke-width="1.35"/>
<line x1="823.8000000000001" y1="376.3" x2="990.0" y2="376.3" stroke="#ffff00" stroke-width="1.35"/>
<line x1="818.6" y1="419.5" x2="824.6" y2="419.5" stroke="#ddd" stroke-width="1.3"/>
<text x="818.0" y="424.9" font-size="15.7" fill="#d8d8d8" stroke="#d8d8d8" text-anchor="end" textLength="13.5" lengthAdjust="spacingAndGlyphs">-4</text>
<line x1="818.6" y1="376.1" x2="824.6" y2="376.1" stroke="#ddd" stroke-width="1.3"/>
<text x="818.0" y="381.5" font-size="15.7" fill="#d8d8d8" stroke="#d8d8d8" text-anchor="end" textLength="13.5" lengthAdjust="spacingAndGlyphs">-3</text>
<line x1="818.6" y1="332.7" x2="824.6" y2="332.7" stroke="#ddd" stroke-width="1.3"/>
<text x="818.0" y="338.1" font-size="15.7" fill="#d8d8d8" stroke="#d8d8d8" text-anchor="end" textLength="13.5" lengthAdjust="spacingAndGlyphs">-2</text>
<line x1="818.6" y1="289.2" x2="824.6" y2="289.2" stroke="#ddd" stroke-width="1.3"/>
<text x="818.0" y="294.6" font-size="15.7" fill="#d8d8d8" stroke="#d8d8d8" text-anchor="end" textLength="13.5" lengthAdjust="spacingAndGlyphs">-1</text>
<line x1="818.6" y1="245.8" x2="824.6" y2="245.8" stroke="#ddd" stroke-width="1.3"/>
<text x="818.0" y="251.2" font-size="15.7" fill="#d8d8d8" stroke="#d8d8d8" text-anchor="end" textLength="8.3" lengthAdjust="spacingAndGlyphs">0</text>
<line x1="818.6" y1="202.4" x2="824.6" y2="202.4" stroke="#ddd" stroke-width="1.3"/>
<text x="818.0" y="207.8" font-size="15.7" fill="#d8d8d8" stroke="#d8d8d8" text-anchor="end" textLength="8.3" lengthAdjust="spacingAndGlyphs">1</text>
<line x1="818.6" y1="158.9" x2="824.6" y2="158.9" stroke="#ddd" stroke-width="1.3"/>
<text x="818.0" y="164.3" font-size="15.7" fill="#d8d8d8" stroke="#d8d8d8" text-anchor="end" textLength="8.3" lengthAdjust="spacingAndGlyphs">2</text>
<line x1="818.6" y1="115.5" x2="824.6" y2="115.5" stroke="#ddd" stroke-width="1.3"/>
<text x="818.0" y="120.9" font-size="15.7" fill="#d8d8d8" stroke="#d8d8d8" text-anchor="end" textLength="8.3" lengthAdjust="spacingAndGlyphs">3</text>
<line x1="818.6" y1="72.1" x2="824.6" y2="72.1" stroke="#ddd" stroke-width="1.3"/>
<text x="818.0" y="77.5" font-size="15.7" fill="#d8d8d8" stroke="#d8d8d8" text-anchor="end" textLength="8.3" lengthAdjust="spacingAndGlyphs">4</text>
<text x="897.4" y="67.0" font-size="15" fill="#cfcfcf" stroke="#cfcfcf" text-anchor="middle" textLength="43.0" lengthAdjust="spacingAndGlyphs">DeltaH</text>
<rect x="414.0" y="425.0" width="589.0" height="204.0" fill="#000"/>
<clipPath id="swc"><rect x="414.0" y="425.0" width="589.0" height="204.0"/></clipPath>
<g clip-path="url(#swc)">
<rect x="432.6" y="433.8" width="58.6" height="60.2" fill="#ffffff" stroke="#fff" stroke-width="1.3"/>
<rect x="434.0" y="435.2" width="55.8" height="57.4" fill="none" stroke="#000" stroke-opacity=".2" stroke-width="1"/>
<rect x="432.6" y="512.8" width="58.6" height="60.2" fill="#ffffff" stroke="#fff" stroke-width="1.3"/>
<rect x="434.0" y="514.1999999999999" width="55.8" height="57.4" fill="none" stroke="#000" stroke-opacity=".2" stroke-width="1"/>
<text x="461.8" y="588.9" font-size="13.4" fill="#fff" stroke="#fff" text-anchor="middle" textLength="35.0" lengthAdjust="spacingAndGlyphs">White</text>
<rect x="502.7" y="433.8" width="58.6" height="60.2" fill="#e5e7e6" stroke="#fff" stroke-width="1.3"/>
<rect x="504.1" y="435.2" width="55.8" height="57.4" fill="none" stroke="#000" stroke-opacity=".2" stroke-width="1"/>
<rect x="502.7" y="512.8" width="58.6" height="60.2" fill="#e4e4e4" stroke="#fff" stroke-width="1.3"/>
<rect x="504.1" y="514.1999999999999" width="55.8" height="57.4" fill="none" stroke="#000" stroke-opacity=".2" stroke-width="1"/>
<text x="531.9" y="588.9" font-size="13.4" fill="#fff" stroke="#fff" text-anchor="middle" textLength="44.5" lengthAdjust="spacingAndGlyphs">Gray 80</text>
<rect x="572.7" y="433.8" width="58.6" height="60.2" fill="#d1d1d1" stroke="#fff" stroke-width="1.3"/>
<rect x="574.1" y="435.2" width="55.8" height="57.4" fill="none" stroke="#000" stroke-opacity=".2" stroke-width="1"/>
<rect x="572.7" y="512.8" width="58.6" height="60.2" fill="#cfcfcf" stroke="#fff" stroke-width="1.3"/>
<rect x="574.1" y="514.1999999999999" width="55.8" height="57.4" fill="none" stroke="#000" stroke-opacity=".2" stroke-width="1"/>
<text x="601.9" y="588.9" font-size="13.4" fill="#fff" stroke="#fff" text-anchor="middle" textLength="44.5" lengthAdjust="spacingAndGlyphs">Gray 65</text>
<rect x="642.8" y="433.8" width="58.6" height="60.2" fill="#bbbbbb" stroke="#fff" stroke-width="1.3"/>
<rect x="644.2" y="435.2" width="55.8" height="57.4" fill="none" stroke="#000" stroke-opacity=".2" stroke-width="1"/>
<rect x="642.8" y="512.8" width="58.6" height="60.2" fill="#b9b9b9" stroke="#fff" stroke-width="1.3"/>
<rect x="644.2" y="514.1999999999999" width="55.8" height="57.4" fill="none" stroke="#000" stroke-opacity=".2" stroke-width="1"/>
<text x="672.0" y="588.9" font-size="13.4" fill="#fff" stroke="#fff" text-anchor="middle" textLength="44.5" lengthAdjust="spacingAndGlyphs">Gray 50</text>
<rect x="712.9" y="433.8" width="58.6" height="60.2" fill="#a1a1a1" stroke="#fff" stroke-width="1.3"/>
<rect x="714.3" y="435.2" width="55.8" height="57.4" fill="none" stroke="#000" stroke-opacity=".2" stroke-width="1"/>
<rect x="712.9" y="512.8" width="58.6" height="60.2" fill="#9f9f9f" stroke="#fff" stroke-width="1.3"/>
<rect x="714.3" y="514.1999999999999" width="55.8" height="57.4" fill="none" stroke="#000" stroke-opacity=".2" stroke-width="1"/>
<text x="742.1" y="588.9" font-size="13.4" fill="#fff" stroke="#fff" text-anchor="middle" textLength="44.5" lengthAdjust="spacingAndGlyphs">Gray 35</text>
<rect x="782.9" y="433.8" width="58.6" height="60.2" fill="#050909" stroke="#fff" stroke-width="1.3"/>
<rect x="784.3" y="435.2" width="55.8" height="57.4" fill="none" stroke="#000" stroke-opacity=".2" stroke-width="1"/>
<rect x="782.9" y="512.8" width="58.6" height="60.2" fill="#000000" stroke="#fff" stroke-width="1.3"/>
<rect x="784.3" y="514.1999999999999" width="55.8" height="57.4" fill="none" stroke="#000" stroke-opacity=".2" stroke-width="1"/>
<text x="812.1" y="588.9" font-size="13.4" fill="#fff" stroke="#fff" text-anchor="middle" textLength="30.5" lengthAdjust="spacingAndGlyphs">Black</text>
<rect x="853.0" y="433.8" width="58.6" height="60.2" fill="#745949" stroke="#fff" stroke-width="1.3"/>
<rect x="854.4" y="435.2" width="55.8" height="57.4" fill="none" stroke="#000" stroke-opacity=".2" stroke-width="1"/>
<rect x="853.0" y="512.8" width="58.6" height="60.2" fill="#735244" stroke="#fff" stroke-width="1.3"/>
<rect x="854.4" y="514.1999999999999" width="55.8" height="57.4" fill="none" stroke="#000" stroke-opacity=".2" stroke-width="1"/>
<text x="882.2" y="588.9" font-size="13.4" fill="#fff" stroke="#fff" text-anchor="middle" textLength="53.0" lengthAdjust="spacingAndGlyphs">Dark Skin</text>
<rect x="923.1" y="433.8" width="58.6" height="60.2" fill="#b99a84" stroke="#fff" stroke-width="1.3"/>
<rect x="924.5" y="435.2" width="55.8" height="57.4" fill="none" stroke="#000" stroke-opacity=".2" stroke-width="1"/>
<rect x="923.1" y="512.8" width="58.6" height="60.2" fill="#c29682" stroke="#fff" stroke-width="1.3"/>
<rect x="924.5" y="514.1999999999999" width="55.8" height="57.4" fill="none" stroke="#000" stroke-opacity=".2" stroke-width="1"/>
<text x="952.3" y="588.9" font-size="13.4" fill="#fff" stroke="#fff" text-anchor="middle" textLength="54.5" lengthAdjust="spacingAndGlyphs">Light Skin</text>
<rect x="993.2" y="433.8" width="58.6" height="60.2" fill="#6c7fa6" stroke="#fff" stroke-width="1.3"/>
<rect x="994.6" y="435.2" width="55.8" height="57.4" fill="none" stroke="#000" stroke-opacity=".2" stroke-width="1"/>
<rect x="993.2" y="512.8" width="58.6" height="60.2" fill="#627a9d" stroke="#fff" stroke-width="1.3"/>
<rect x="994.6" y="514.1999999999999" width="55.8" height="57.4" fill="none" stroke="#000" stroke-opacity=".2" stroke-width="1"/>
<text x="1022.4" y="588.9" font-size="13.4" fill="#fff" stroke="#fff" text-anchor="middle" textLength="48.0" lengthAdjust="spacingAndGlyphs">Blue Sky</text>
</g>
<text transform="translate(428.2,464.5) rotate(-90)" font-size="13.4" fill="#fff" stroke="#fff" text-anchor="middle" textLength="36" lengthAdjust="spacingAndGlyphs">Actual</text>
<text transform="translate(428.2,542.8) rotate(-90)" font-size="13.4" fill="#fff" stroke="#fff" text-anchor="middle" textLength="36" lengthAdjust="spacingAndGlyphs">Target</text>
<defs><linearGradient id="sbt" x1="0" y1="0" x2="0" y2="1"><stop offset="0" stop-color="#686868"/><stop offset="1" stop-color="#5a5a5a"/></linearGradient></defs>
<rect x="414.0" y="612" width="589.0" height="17" rx="2.5" fill="url(#sbt)"/>
<rect x="432.4" y="613.6" width="151.2" height="13.6" rx="5.5" fill="#454545"/>
<rect x="415.4" y="613.6" width="13.6" height="13.6" rx="3" fill="#838383" stroke="#8f8f8f" stroke-width=".8"/>
<polygon points="425.6,616 425.6,625 418.6,620.5" fill="#3a3a3a"/>
<rect x="987.3" y="613.6" width="13.6" height="13.6" rx="3" fill="#838383" stroke="#8f8f8f" stroke-width=".8"/>
<polygon points="991.6,615.2 991.6,625.8 997.4,620.5" fill="#3a3a3a"/>
<defs><linearGradient id="thd" x1="0" y1="0" x2="0" y2="1"><stop offset="0" stop-color="#2b2b2b"/><stop offset=".48" stop-color="#262626"/><stop offset=".52" stop-color="#161616"/><stop offset="1" stop-color="#101010"/></linearGradient></defs>
<rect x="330.0" y="629.8" width="1384.5" height="29.40000000000009" fill="url(#thd)"/>
<rect x="330.0" y="629.8" width="8.8" height="29.40000000000009" fill="#000"/>
<text transform="translate(409.4,650.6) scale(0.568,1)" font-size="15.6" fill="#fff" stroke="#fff">White</text>
<text transform="translate(444.4,650.6) scale(0.568,1)" font-size="15.6" fill="#fff" stroke="#fff">Gray 80</text>
<text transform="translate(481.0,650.6) scale(0.568,1)" font-size="15.6" fill="#fff" stroke="#fff">Gray 65</text>
<text transform="translate(517.5,650.6) scale(0.568,1)" font-size="15.6" fill="#fff" stroke="#fff">Gray 50</text>
<text transform="translate(553.9,650.6) scale(0.568,1)" font-size="15.6" fill="#fff" stroke="#fff">Gray 35</text>
<text transform="translate(590.5,650.6) scale(0.568,1)" font-size="15.6" fill="#fff" stroke="#fff">Black</text>
<text transform="translate(617.0,650.6) scale(0.568,1)" font-size="15.6" fill="#fff" stroke="#fff">Dark Skin</text>
<text transform="translate(660.4,650.6) scale(0.568,1)" font-size="15.6" fill="#fff" stroke="#fff">Light Skin</text>
<text transform="translate(704.5,650.6) scale(0.568,1)" font-size="15.6" fill="#fff" stroke="#fff">Blue Sky</text>
<text transform="translate(743.5,650.6) scale(0.568,1)" font-size="15.6" fill="#fff" stroke="#fff">Foliage</text>
<text transform="translate(777.7,650.6) scale(0.568,1)" font-size="15.6" fill="#fff" stroke="#fff">Blue Flower</text>
<text transform="translate(831.0,650.6) scale(0.568,1)" font-size="15.6" fill="#fff" stroke="#fff">Bluish Green</text>
<text transform="translate(888.0,650.6) scale(0.568,1)" font-size="15.6" fill="#fff" stroke="#fff">Orange</text>
<text transform="translate(923.0,650.6) scale(0.568,1)" font-size="15.6" fill="#fff" stroke="#fff">Purplish Blue</text>
<text transform="translate(981.7,650.6) scale(0.568,1)" font-size="15.6" fill="#fff" stroke="#fff">Moderate Red</text>
<text transform="translate(1045.2,650.6) scale(0.568,1)" font-size="15.6" fill="#fff" stroke="#fff">Purple</text>
<text transform="translate(1077.0,650.6) scale(0.568,1)" font-size="15.6" fill="#fff" stroke="#fff">Yellow Green</text>
<text transform="translate(1136.0,650.6) scale(0.568,1)" font-size="15.6" fill="#fff" stroke="#fff">Orange Yellow</text>
<text transform="translate(1199.5,650.6) scale(0.568,1)" font-size="15.6" fill="#fff" stroke="#fff">Blue</text>
<text transform="translate(1229.2,650.6) scale(0.568,1)" font-size="15.6" fill="#fff" stroke="#fff">Green</text>
<text transform="translate(1259.3,650.6) scale(0.568,1)" font-size="15.6" fill="#fff" stroke="#fff">Red</text>
<text transform="translate(1289.0,650.6) scale(0.568,1)" font-size="15.6" fill="#fff" stroke="#fff">Yellow</text>
<text transform="translate(1324.6,650.6) scale(0.568,1)" font-size="15.6" fill="#fff" stroke="#fff">Magenta</text>
<text transform="translate(1366.4,650.6) scale(0.568,1)" font-size="15.6" fill="#fff" stroke="#fff">Cyan</text>
<text transform="translate(1396.1,650.6) scale(0.568,1)" font-size="15.6" fill="#fff" stroke="#fff">100% Red</text>
<text transform="translate(1441.7,650.6) scale(0.568,1)" font-size="15.6" fill="#fff" stroke="#fff">100% Green</text>
<text transform="translate(1496.5,650.6) scale(0.568,1)" font-size="15.6" fill="#fff" stroke="#fff">100% Blue</text>
<text transform="translate(1544.6,650.6) scale(0.568,1)" font-size="15.6" fill="#fff" stroke="#fff">100% Cyan</text>
<text transform="translate(1594.4,650.6) scale(0.568,1)" font-size="15.6" fill="#fff" stroke="#fff">100% Magenta</text>
<text transform="translate(1660.9,650.6) scale(0.568,1)" font-size="15.6" fill="#fff" stroke="#fff">100% Yellow</text>
<rect x="330.0" y="659.2" width="1384.5" height="26.7" fill="#3c3c3c"/>
<rect x="330.0" y="659.2" width="8.8" height="26.7" fill="#2b2b2b"/>
<text transform="translate(341.2,679.2) scale(0.585,1)" font-size="15.6" fill="#f4f4f4" stroke="#f4f4f4">x: CIE31</text>
<text transform="translate(409.4,679.2) scale(0.625,1)" font-size="15.6" fill="#f4f4f4" stroke="#f4f4f4">0,31</text>
<text transform="translate(444.4,679.2) scale(0.625,1)" font-size="15.6" fill="#f4f4f4" stroke="#f4f4f4">0,31</text>
<text transform="translate(481.0,679.2) scale(0.625,1)" font-size="15.6" fill="#f4f4f4" stroke="#f4f4f4">0,31</text>
<text transform="translate(517.5,679.2) scale(0.625,1)" font-size="15.6" fill="#f4f4f4" stroke="#f4f4f4">0,31</text>
<text transform="translate(553.9,679.2) scale(0.625,1)" font-size="15.6" fill="#f4f4f4" stroke="#f4f4f4">0,31</text>
<text transform="translate(590.5,679.2) scale(0.625,1)" font-size="15.6" fill="#f4f4f4" stroke="#f4f4f4">0,27</text>
<text transform="translate(617.0,679.2) scale(0.625,1)" font-size="15.6" fill="#f4f4f4" stroke="#f4f4f4">0,38</text>
<text transform="translate(660.4,679.2) scale(0.625,1)" font-size="15.6" fill="#f4f4f4" stroke="#f4f4f4">0,37</text>
<text transform="translate(704.5,679.2) scale(0.625,1)" font-size="15.6" fill="#f4f4f4" stroke="#f4f4f4">0,26</text>
<text transform="translate(743.5,679.2) scale(0.625,1)" font-size="15.6" fill="#f4f4f4" stroke="#f4f4f4">0,34</text>
<text transform="translate(777.7,679.2) scale(0.625,1)" font-size="15.6" fill="#f4f4f4" stroke="#f4f4f4">0,27</text>
<text transform="translate(831.0,679.2) scale(0.625,1)" font-size="15.6" fill="#f4f4f4" stroke="#f4f4f4">0,28</text>
<text transform="translate(888.0,679.2) scale(0.625,1)" font-size="15.6" fill="#f4f4f4" stroke="#f4f4f4">0,48</text>
<text transform="translate(923.0,679.2) scale(0.625,1)" font-size="15.6" fill="#f4f4f4" stroke="#f4f4f4">0,23</text>
<text transform="translate(981.7,679.2) scale(0.625,1)" font-size="15.6" fill="#f4f4f4" stroke="#f4f4f4">0,42</text>
<text transform="translate(1045.2,679.2) scale(0.625,1)" font-size="15.6" fill="#f4f4f4" stroke="#f4f4f4">0,28</text>
<text transform="translate(1077.0,679.2) scale(0.625,1)" font-size="15.6" fill="#f4f4f4" stroke="#f4f4f4">0,38</text>
<text transform="translate(1136.0,679.2) scale(0.625,1)" font-size="15.6" fill="#f4f4f4" stroke="#f4f4f4">0,45</text>
<text transform="translate(1199.5,679.2) scale(0.625,1)" font-size="15.6" fill="#f4f4f4" stroke="#f4f4f4">0,20</text>
<text transform="translate(1229.2,679.2) scale(0.625,1)" font-size="15.6" fill="#f4f4f4" stroke="#f4f4f4">0,33</text>
<text transform="translate(1259.3,679.2) scale(0.625,1)" font-size="15.6" fill="#f4f4f4" stroke="#f4f4f4">0,48</text>
<text transform="translate(1289.0,679.2) scale(0.625,1)" font-size="15.6" fill="#f4f4f4" stroke="#f4f4f4">0,44</text>
<text transform="translate(1324.6,679.2) scale(0.625,1)" font-size="15.6" fill="#f4f4f4" stroke="#f4f4f4">0,35</text>
<text transform="translate(1366.4,679.2) scale(0.625,1)" font-size="15.6" fill="#f4f4f4" stroke="#f4f4f4">0,23</text>
<text transform="translate(1396.1,679.2) scale(0.625,1)" font-size="15.6" fill="#f4f4f4" stroke="#f4f4f4">0,57</text>
<text transform="translate(1441.7,679.2) scale(0.625,1)" font-size="15.6" fill="#f4f4f4" stroke="#f4f4f4">0,34</text>
<text transform="translate(1496.5,679.2) scale(0.625,1)" font-size="15.6" fill="#f4f4f4" stroke="#f4f4f4">0,16</text>
<text transform="translate(1544.6,679.2) scale(0.625,1)" font-size="15.6" fill="#f4f4f4" stroke="#f4f4f4">0,24</text>
<text transform="translate(1594.4,679.2) scale(0.625,1)" font-size="15.6" fill="#f4f4f4" stroke="#f4f4f4">0,30</text>
<text transform="translate(1660.9,679.2) scale(0.625,1)" font-size="15.6" fill="#f4f4f4" stroke="#f4f4f4">0,42</text>
<rect x="330.0" y="685.7" width="1384.5" height="26.7" fill="#7e7e7e"/>
<rect x="330.0" y="685.7" width="8.8" height="26.7" fill="#393939"/>
<text transform="translate(341.2,705.7) scale(0.585,1)" font-size="15.6" fill="#f4f4f4" stroke="#f4f4f4">y: CIE31</text>
<text transform="translate(409.4,705.7) scale(0.625,1)" font-size="15.6" fill="#f4f4f4" stroke="#f4f4f4">0,33</text>
<text transform="translate(444.4,705.7) scale(0.625,1)" font-size="15.6" fill="#f4f4f4" stroke="#f4f4f4">0,33</text>
<text transform="translate(481.0,705.7) scale(0.625,1)" font-size="15.6" fill="#f4f4f4" stroke="#f4f4f4">0,33</text>
<text transform="translate(517.5,705.7) scale(0.625,1)" font-size="15.6" fill="#f4f4f4" stroke="#f4f4f4">0,33</text>
<text transform="translate(553.9,705.7) scale(0.625,1)" font-size="15.6" fill="#f4f4f4" stroke="#f4f4f4">0,33</text>
<text transform="translate(590.5,705.7) scale(0.625,1)" font-size="15.6" fill="#f4f4f4" stroke="#f4f4f4">0,31</text>
<text transform="translate(617.0,705.7) scale(0.625,1)" font-size="15.6" fill="#f4f4f4" stroke="#f4f4f4">0,36</text>
<text transform="translate(660.4,705.7) scale(0.625,1)" font-size="15.6" fill="#f4f4f4" stroke="#f4f4f4">0,36</text>
<text transform="translate(704.5,705.7) scale(0.625,1)" font-size="15.6" fill="#f4f4f4" stroke="#f4f4f4">0,27</text>
<text transform="translate(743.5,705.7) scale(0.625,1)" font-size="15.6" fill="#f4f4f4" stroke="#f4f4f4">0,41</text>
<text transform="translate(777.7,705.7) scale(0.625,1)" font-size="15.6" fill="#f4f4f4" stroke="#f4f4f4">0,26</text>
<text transform="translate(831.0,705.7) scale(0.625,1)" font-size="15.6" fill="#f4f4f4" stroke="#f4f4f4">0,35</text>
<text transform="translate(888.0,705.7) scale(0.625,1)" font-size="15.6" fill="#f4f4f4" stroke="#f4f4f4">0,41</text>
<text transform="translate(923.0,705.7) scale(0.625,1)" font-size="15.6" fill="#f4f4f4" stroke="#f4f4f4">0,22</text>
<text transform="translate(981.7,705.7) scale(0.625,1)" font-size="15.6" fill="#f4f4f4" stroke="#f4f4f4">0,33</text>
<text transform="translate(1045.2,705.7) scale(0.625,1)" font-size="15.6" fill="#f4f4f4" stroke="#f4f4f4">0,24</text>
<text transform="translate(1077.0,705.7) scale(0.625,1)" font-size="15.6" fill="#f4f4f4" stroke="#f4f4f4">0,47</text>
<text transform="translate(1136.0,705.7) scale(0.625,1)" font-size="15.6" fill="#f4f4f4" stroke="#f4f4f4">0,44</text>
<text transform="translate(1199.5,705.7) scale(0.625,1)" font-size="15.6" fill="#f4f4f4" stroke="#f4f4f4">0,17</text>
<text transform="translate(1229.2,705.7) scale(0.625,1)" font-size="15.6" fill="#f4f4f4" stroke="#f4f4f4">0,46</text>
<text transform="translate(1259.3,705.7) scale(0.625,1)" font-size="15.6" fill="#f4f4f4" stroke="#f4f4f4">0,34</text>
<text transform="translate(1289.0,705.7) scale(0.625,1)" font-size="15.6" fill="#f4f4f4" stroke="#f4f4f4">0,46</text>
<text transform="translate(1324.6,705.7) scale(0.625,1)" font-size="15.6" fill="#f4f4f4" stroke="#f4f4f4">0,27</text>
<text transform="translate(1366.4,705.7) scale(0.625,1)" font-size="15.6" fill="#f4f4f4" stroke="#f4f4f4">0,27</text>
<text transform="translate(1396.1,705.7) scale(0.625,1)" font-size="15.6" fill="#f4f4f4" stroke="#f4f4f4">0,36</text>
<text transform="translate(1441.7,705.7) scale(0.625,1)" font-size="15.6" fill="#f4f4f4" stroke="#f4f4f4">0,55</text>
<text transform="translate(1496.5,705.7) scale(0.625,1)" font-size="15.6" fill="#f4f4f4" stroke="#f4f4f4">0,10</text>
<text transform="translate(1544.6,705.7) scale(0.625,1)" font-size="15.6" fill="#f4f4f4" stroke="#f4f4f4">0,32</text>
<text transform="translate(1594.4,705.7) scale(0.625,1)" font-size="15.6" fill="#f4f4f4" stroke="#f4f4f4">0,19</text>
<text transform="translate(1660.9,705.7) scale(0.625,1)" font-size="15.6" fill="#f4f4f4" stroke="#f4f4f4">0,49</text>
<rect x="330.0" y="712.2" width="1384.5" height="26.7" fill="#3c3c3c"/>
<rect x="330.0" y="712.2" width="8.8" height="26.7" fill="#2b2b2b"/>
<text transform="translate(341.2,732.2) scale(0.585,1)" font-size="15.6" fill="#f4f4f4" stroke="#f4f4f4">Y</text>
<text transform="translate(409.4,732.2) scale(0.625,1)" font-size="15.6" fill="#f4f4f4" stroke="#f4f4f4">258,57</text>
<text transform="translate(444.4,732.2) scale(0.625,1)" font-size="15.6" fill="#f4f4f4" stroke="#f4f4f4">205,95</text>
<text transform="translate(481.0,732.2) scale(0.625,1)" font-size="15.6" fill="#f4f4f4" stroke="#f4f4f4">166,28</text>
<text transform="translate(517.5,732.2) scale(0.625,1)" font-size="15.6" fill="#f4f4f4" stroke="#f4f4f4">129,22</text>
<text transform="translate(553.9,732.2) scale(0.625,1)" font-size="15.6" fill="#f4f4f4" stroke="#f4f4f4">90,73</text>
<text transform="translate(590.5,732.2) scale(0.625,1)" font-size="15.6" fill="#f4f4f4" stroke="#f4f4f4">0,44</text>
<text transform="translate(617.0,732.2) scale(0.625,1)" font-size="15.6" fill="#f4f4f4" stroke="#f4f4f4">27,88</text>
<text transform="translate(660.4,732.2) scale(0.625,1)" font-size="15.6" fill="#f4f4f4" stroke="#f4f4f4">92,54</text>
<text transform="translate(704.5,732.2) scale(0.625,1)" font-size="15.6" fill="#f4f4f4" stroke="#f4f4f4">52,46</text>
<text transform="translate(743.5,732.2) scale(0.625,1)" font-size="15.6" fill="#f4f4f4" stroke="#f4f4f4">34,97</text>
<text transform="translate(777.7,732.2) scale(0.625,1)" font-size="15.6" fill="#f4f4f4" stroke="#f4f4f4">65,58</text>
<text transform="translate(831.0,732.2) scale(0.625,1)" font-size="15.6" fill="#f4f4f4" stroke="#f4f4f4">108,18</text>
<text transform="translate(888.0,732.2) scale(0.625,1)" font-size="15.6" fill="#f4f4f4" stroke="#f4f4f4">74,54</text>
<text transform="translate(923.0,732.2) scale(0.625,1)" font-size="15.6" fill="#f4f4f4" stroke="#f4f4f4">36,08</text>
<text transform="translate(981.7,732.2) scale(0.625,1)" font-size="15.6" fill="#f4f4f4" stroke="#f4f4f4">52,15</text>
<text transform="translate(1045.2,732.2) scale(0.625,1)" font-size="15.6" fill="#f4f4f4" stroke="#f4f4f4">20,75</text>
<text transform="translate(1077.0,732.2) scale(0.625,1)" font-size="15.6" fill="#f4f4f4" stroke="#f4f4f4">106,60</text>
<text transform="translate(1136.0,732.2) scale(0.625,1)" font-size="15.6" fill="#f4f4f4" stroke="#f4f4f4">108,62</text>
<text transform="translate(1199.5,732.2) scale(0.625,1)" font-size="15.6" fill="#f4f4f4" stroke="#f4f4f4">21,20</text>
<text transform="translate(1229.2,732.2) scale(0.625,1)" font-size="15.6" fill="#f4f4f4" stroke="#f4f4f4">57,85</text>
<text transform="translate(1259.3,732.2) scale(0.625,1)" font-size="15.6" fill="#f4f4f4" stroke="#f4f4f4">32,88</text>
<text transform="translate(1289.0,732.2) scale(0.625,1)" font-size="15.6" fill="#f4f4f4" stroke="#f4f4f4">147,13</text>
<text transform="translate(1324.6,732.2) scale(0.625,1)" font-size="15.6" fill="#f4f4f4" stroke="#f4f4f4">54,30</text>
<text transform="translate(1366.4,732.2) scale(0.625,1)" font-size="15.6" fill="#f4f4f4" stroke="#f4f4f4">52,92</text>
<text transform="translate(1396.1,732.2) scale(0.625,1)" font-size="15.6" fill="#f4f4f4" stroke="#f4f4f4">58,14</text>
<text transform="translate(1441.7,732.2) scale(0.625,1)" font-size="15.6" fill="#f4f4f4" stroke="#f4f4f4">168,95</text>
<text transform="translate(1496.5,732.2) scale(0.625,1)" font-size="15.6" fill="#f4f4f4" stroke="#f4f4f4">30,80</text>
<text transform="translate(1544.6,732.2) scale(0.625,1)" font-size="15.6" fill="#f4f4f4" stroke="#f4f4f4">199,93</text>
<text transform="translate(1594.4,732.2) scale(0.625,1)" font-size="15.6" fill="#f4f4f4" stroke="#f4f4f4">88,87</text>
<text transform="translate(1660.9,732.2) scale(0.625,1)" font-size="15.6" fill="#f4f4f4" stroke="#f4f4f4">227,15</text>
<rect x="330.0" y="738.7" width="1384.5" height="26.7" fill="#7e7e7e"/>
<rect x="330.0" y="738.7" width="8.8" height="26.7" fill="#393939"/>
<text transform="translate(341.2,758.7) scale(0.585,1)" font-size="15.6" fill="#f4f4f4" stroke="#f4f4f4">Target x:CIE31</text>
<text transform="translate(409.4,758.7) scale(0.625,1)" font-size="15.6" fill="#f4f4f4" stroke="#f4f4f4">0,31</text>
<text transform="translate(444.4,758.7) scale(0.625,1)" font-size="15.6" fill="#f4f4f4" stroke="#f4f4f4">0,31</text>
<text transform="translate(481.0,758.7) scale(0.625,1)" font-size="15.6" fill="#f4f4f4" stroke="#f4f4f4">0,31</text>
<text transform="translate(517.5,758.7) scale(0.625,1)" font-size="15.6" fill="#f4f4f4" stroke="#f4f4f4">0,31</text>
<text transform="translate(553.9,758.7) scale(0.625,1)" font-size="15.6" fill="#f4f4f4" stroke="#f4f4f4">0,31</text>
<text transform="translate(590.5,758.7) scale(0.625,1)" font-size="15.6" fill="#f4f4f4" stroke="#f4f4f4">0,31</text>
<text transform="translate(617.0,758.7) scale(0.625,1)" font-size="15.6" fill="#f4f4f4" stroke="#f4f4f4">0,40</text>
<text transform="translate(660.4,758.7) scale(0.625,1)" font-size="15.6" fill="#f4f4f4" stroke="#f4f4f4">0,38</text>
<text transform="translate(704.5,758.7) scale(0.625,1)" font-size="15.6" fill="#f4f4f4" stroke="#f4f4f4">0,25</text>
<text transform="translate(743.5,758.7) scale(0.625,1)" font-size="15.6" fill="#f4f4f4" stroke="#f4f4f4">0,34</text>
<text transform="translate(777.7,758.7) scale(0.625,1)" font-size="15.6" fill="#f4f4f4" stroke="#f4f4f4">0,27</text>
<text transform="translate(831.0,758.7) scale(0.625,1)" font-size="15.6" fill="#f4f4f4" stroke="#f4f4f4">0,26</text>
<text transform="translate(888.0,758.7) scale(0.625,1)" font-size="15.6" fill="#f4f4f4" stroke="#f4f4f4">0,51</text>
<text transform="translate(923.0,758.7) scale(0.625,1)" font-size="15.6" fill="#f4f4f4" stroke="#f4f4f4">0,22</text>
<text transform="translate(981.7,758.7) scale(0.625,1)" font-size="15.6" fill="#f4f4f4" stroke="#f4f4f4">0,46</text>
<text transform="translate(1045.2,758.7) scale(0.625,1)" font-size="15.6" fill="#f4f4f4" stroke="#f4f4f4">0,29</text>
<text transform="translate(1077.0,758.7) scale(0.625,1)" font-size="15.6" fill="#f4f4f4" stroke="#f4f4f4">0,38</text>
<text transform="translate(1136.0,758.7) scale(0.625,1)" font-size="15.6" fill="#f4f4f4" stroke="#f4f4f4">0,47</text>
<text transform="translate(1199.5,758.7) scale(0.625,1)" font-size="15.6" fill="#f4f4f4" stroke="#f4f4f4">0,19</text>
<text transform="translate(1229.2,758.7) scale(0.625,1)" font-size="15.6" fill="#f4f4f4" stroke="#f4f4f4">0,31</text>
<text transform="translate(1259.3,758.7) scale(0.625,1)" font-size="15.6" fill="#f4f4f4" stroke="#f4f4f4">0,54</text>
<text transform="translate(1289.0,758.7) scale(0.625,1)" font-size="15.6" fill="#f4f4f4" stroke="#f4f4f4">0,45</text>
<text transform="translate(1324.6,758.7) scale(0.625,1)" font-size="15.6" fill="#f4f4f4" stroke="#f4f4f4">0,37</text>
<text transform="translate(1366.4,758.7) scale(0.625,1)" font-size="15.6" fill="#f4f4f4" stroke="#f4f4f4">0,21</text>
<text transform="translate(1396.1,758.7) scale(0.625,1)" font-size="15.6" fill="#f4f4f4" stroke="#f4f4f4">0,64</text>
<text transform="translate(1441.7,758.7) scale(0.625,1)" font-size="15.6" fill="#f4f4f4" stroke="#f4f4f4">0,30</text>
<text transform="translate(1496.5,758.7) scale(0.625,1)" font-size="15.6" fill="#f4f4f4" stroke="#f4f4f4">0,15</text>
<text transform="translate(1544.6,758.7) scale(0.625,1)" font-size="15.6" fill="#f4f4f4" stroke="#f4f4f4">0,22</text>
<text transform="translate(1594.4,758.7) scale(0.625,1)" font-size="15.6" fill="#f4f4f4" stroke="#f4f4f4">0,32</text>
<text transform="translate(1660.9,758.7) scale(0.625,1)" font-size="15.6" fill="#f4f4f4" stroke="#f4f4f4">0,42</text>
<rect x="330.0" y="765.3" width="1384.5" height="26.7" fill="#3c3c3c"/>
<rect x="330.0" y="765.3" width="8.8" height="26.7" fill="#2b2b2b"/>
<text transform="translate(341.2,785.2) scale(0.585,1)" font-size="15.6" fill="#f4f4f4" stroke="#f4f4f4">Target y:CIE31</text>
<text transform="translate(409.4,785.2) scale(0.625,1)" font-size="15.6" fill="#f4f4f4" stroke="#f4f4f4">0,33</text>
<text transform="translate(444.4,785.2) scale(0.625,1)" font-size="15.6" fill="#f4f4f4" stroke="#f4f4f4">0,33</text>
<text transform="translate(481.0,785.2) scale(0.625,1)" font-size="15.6" fill="#f4f4f4" stroke="#f4f4f4">0,33</text>
<text transform="translate(517.5,785.2) scale(0.625,1)" font-size="15.6" fill="#f4f4f4" stroke="#f4f4f4">0,33</text>
<text transform="translate(553.9,785.2) scale(0.625,1)" font-size="15.6" fill="#f4f4f4" stroke="#f4f4f4">0,33</text>
<text transform="translate(590.5,785.2) scale(0.625,1)" font-size="15.6" fill="#f4f4f4" stroke="#f4f4f4">0,33</text>
<text transform="translate(617.0,785.2) scale(0.625,1)" font-size="15.6" fill="#f4f4f4" stroke="#f4f4f4">0,36</text>
<text transform="translate(660.4,785.2) scale(0.625,1)" font-size="15.6" fill="#f4f4f4" stroke="#f4f4f4">0,36</text>
<text transform="translate(704.5,785.2) scale(0.625,1)" font-size="15.6" fill="#f4f4f4" stroke="#f4f4f4">0,27</text>
<text transform="translate(743.5,785.2) scale(0.625,1)" font-size="15.6" fill="#f4f4f4" stroke="#f4f4f4">0,43</text>
<text transform="translate(777.7,785.2) scale(0.625,1)" font-size="15.6" fill="#f4f4f4" stroke="#f4f4f4">0,25</text>
<text transform="translate(831.0,785.2) scale(0.625,1)" font-size="15.6" fill="#f4f4f4" stroke="#f4f4f4">0,36</text>
<text transform="translate(888.0,785.2) scale(0.625,1)" font-size="15.6" fill="#f4f4f4" stroke="#f4f4f4">0,41</text>
<text transform="translate(923.0,785.2) scale(0.625,1)" font-size="15.6" fill="#f4f4f4" stroke="#f4f4f4">0,19</text>
<text transform="translate(981.7,785.2) scale(0.625,1)" font-size="15.6" fill="#f4f4f4" stroke="#f4f4f4">0,31</text>
<text transform="translate(1045.2,785.2) scale(0.625,1)" font-size="15.6" fill="#f4f4f4" stroke="#f4f4f4">0,22</text>
<text transform="translate(1077.0,785.2) scale(0.625,1)" font-size="15.6" fill="#f4f4f4" stroke="#f4f4f4">0,49</text>
<text transform="translate(1136.0,785.2) scale(0.625,1)" font-size="15.6" fill="#f4f4f4" stroke="#f4f4f4">0,44</text>
<text transform="translate(1199.5,785.2) scale(0.625,1)" font-size="15.6" fill="#f4f4f4" stroke="#f4f4f4">0,14</text>
<text transform="translate(1229.2,785.2) scale(0.625,1)" font-size="15.6" fill="#f4f4f4" stroke="#f4f4f4">0,49</text>
<text transform="translate(1259.3,785.2) scale(0.625,1)" font-size="15.6" fill="#f4f4f4" stroke="#f4f4f4">0,32</text>
<text transform="translate(1289.0,785.2) scale(0.625,1)" font-size="15.6" fill="#f4f4f4" stroke="#f4f4f4">0,47</text>
<text transform="translate(1324.6,785.2) scale(0.625,1)" font-size="15.6" fill="#f4f4f4" stroke="#f4f4f4">0,25</text>
<text transform="translate(1366.4,785.2) scale(0.625,1)" font-size="15.6" fill="#f4f4f4" stroke="#f4f4f4">0,27</text>
<text transform="translate(1396.1,785.2) scale(0.625,1)" font-size="15.6" fill="#f4f4f4" stroke="#f4f4f4">0,33</text>
<text transform="translate(1441.7,785.2) scale(0.625,1)" font-size="15.6" fill="#f4f4f4" stroke="#f4f4f4">0,60</text>
<text transform="translate(1496.5,785.2) scale(0.625,1)" font-size="15.6" fill="#f4f4f4" stroke="#f4f4f4">0,06</text>
<text transform="translate(1544.6,785.2) scale(0.625,1)" font-size="15.6" fill="#f4f4f4" stroke="#f4f4f4">0,33</text>
<text transform="translate(1594.4,785.2) scale(0.625,1)" font-size="15.6" fill="#f4f4f4" stroke="#f4f4f4">0,15</text>
<text transform="translate(1660.9,785.2) scale(0.625,1)" font-size="15.6" fill="#f4f4f4" stroke="#f4f4f4">0,51</text>
<rect x="330.0" y="791.8" width="1384.5" height="26.7" fill="#7e7e7e"/>
<rect x="330.0" y="791.8" width="8.8" height="26.7" fill="#393939"/>
<text transform="translate(341.2,811.7) scale(0.585,1)" font-size="15.6" fill="#f4f4f4" stroke="#f4f4f4">Target Y</text>
<text transform="translate(409.4,811.7) scale(0.625,1)" font-size="15.6" fill="#f4f4f4" stroke="#f4f4f4">258,57</text>
<text transform="translate(444.4,811.7) scale(0.625,1)" font-size="15.6" fill="#f4f4f4" stroke="#f4f4f4">204,60</text>
<text transform="translate(481.0,811.7) scale(0.625,1)" font-size="15.6" fill="#f4f4f4" stroke="#f4f4f4">164,86</text>
<text transform="translate(517.5,811.7) scale(0.625,1)" font-size="15.6" fill="#f4f4f4" stroke="#f4f4f4">126,96</text>
<text transform="translate(553.9,811.7) scale(0.625,1)" font-size="15.6" fill="#f4f4f4" stroke="#f4f4f4">88,41</text>
<text transform="translate(590.5,811.7) scale(0.625,1)" font-size="15.6" fill="#f4f4f4" stroke="#f4f4f4">0,00</text>
<text transform="translate(617.0,811.7) scale(0.625,1)" font-size="15.6" fill="#f4f4f4" stroke="#f4f4f4">26,05</text>
<text transform="translate(660.4,811.7) scale(0.625,1)" font-size="15.6" fill="#f4f4f4" stroke="#f4f4f4">90,23</text>
<text transform="translate(704.5,811.7) scale(0.625,1)" font-size="15.6" fill="#f4f4f4" stroke="#f4f4f4">48,35</text>
<text transform="translate(743.5,811.7) scale(0.625,1)" font-size="15.6" fill="#f4f4f4" stroke="#f4f4f4">33,70</text>
<text transform="translate(777.7,811.7) scale(0.625,1)" font-size="15.6" fill="#f4f4f4" stroke="#f4f4f4">60,29</text>
<text transform="translate(831.0,811.7) scale(0.625,1)" font-size="15.6" fill="#f4f4f4" stroke="#f4f4f4">108,27</text>
<text transform="translate(888.0,811.7) scale(0.625,1)" font-size="15.6" fill="#f4f4f4" stroke="#f4f4f4">73,30</text>
<text transform="translate(923.0,811.7) scale(0.625,1)" font-size="15.6" fill="#f4f4f4" stroke="#f4f4f4">30,39</text>
<text transform="translate(981.7,811.7) scale(0.625,1)" font-size="15.6" fill="#f4f4f4" stroke="#f4f4f4">48,29</text>
<text transform="translate(1045.2,811.7) scale(0.625,1)" font-size="15.6" fill="#f4f4f4" stroke="#f4f4f4">17,26</text>
<text transform="translate(1077.0,811.7) scale(0.625,1)" font-size="15.6" fill="#f4f4f4" stroke="#f4f4f4">110,55</text>
<text transform="translate(1136.0,811.7) scale(0.625,1)" font-size="15.6" fill="#f4f4f4" stroke="#f4f4f4">109,92</text>
<text transform="translate(1199.5,811.7) scale(0.625,1)" font-size="15.6" fill="#f4f4f4" stroke="#f4f4f4">16,14</text>
<text transform="translate(1229.2,811.7) scale(0.625,1)" font-size="15.6" fill="#f4f4f4" stroke="#f4f4f4">59,40</text>
<text transform="translate(1259.3,811.7) scale(0.625,1)" font-size="15.6" fill="#f4f4f4" stroke="#f4f4f4">30,15</text>
<text transform="translate(1289.0,811.7) scale(0.625,1)" font-size="15.6" fill="#f4f4f4" stroke="#f4f4f4">152,46</text>
<text transform="translate(1324.6,811.7) scale(0.625,1)" font-size="15.6" fill="#f4f4f4" stroke="#f4f4f4">48,68</text>
<text transform="translate(1366.4,811.7) scale(0.625,1)" font-size="15.6" fill="#f4f4f4" stroke="#f4f4f4">50,21</text>
<text transform="translate(1396.1,811.7) scale(0.625,1)" font-size="15.6" fill="#f4f4f4" stroke="#f4f4f4">54,99</text>
<text transform="translate(1441.7,811.7) scale(0.625,1)" font-size="15.6" fill="#f4f4f4" stroke="#f4f4f4">184,92</text>
<text transform="translate(1496.5,811.7) scale(0.625,1)" font-size="15.6" fill="#f4f4f4" stroke="#f4f4f4">18,66</text>
<text transform="translate(1544.6,811.7) scale(0.625,1)" font-size="15.6" fill="#f4f4f4" stroke="#f4f4f4">203,58</text>
<text transform="translate(1594.4,811.7) scale(0.625,1)" font-size="15.6" fill="#f4f4f4" stroke="#f4f4f4">73,65</text>
<text transform="translate(1660.9,811.7) scale(0.625,1)" font-size="15.6" fill="#f4f4f4" stroke="#f4f4f4">239,90</text>
<rect x="330.0" y="818.3" width="1384.5" height="26.7" fill="#3c3c3c"/>
<rect x="330.0" y="818.3" width="8.8" height="26.7" fill="#2b2b2b"/>
<text transform="translate(341.2,838.2) scale(0.585,1)" font-size="15.6" fill="#f4f4f4" stroke="#f4f4f4">ΔE 2000</text>
<text transform="translate(409.4,838.2) scale(0.625,1)" font-size="15.6" fill="#f4f4f4" stroke="#f4f4f4">0,19</text>
<text transform="translate(444.4,838.2) scale(0.625,1)" font-size="15.6" fill="#f4f4f4" stroke="#f4f4f4">0,30</text>
<text transform="translate(481.0,838.2) scale(0.625,1)" font-size="15.6" fill="#f4f4f4" stroke="#f4f4f4">0,53</text>
<text transform="translate(517.5,838.2) scale(0.625,1)" font-size="15.6" fill="#f4f4f4" stroke="#f4f4f4">0,54</text>
<text transform="translate(553.9,838.2) scale(0.625,1)" font-size="15.6" fill="#f4f4f4" stroke="#f4f4f4">0,78</text>
<text transform="translate(590.5,838.2) scale(0.625,1)" font-size="15.6" fill="#f4f4f4" stroke="#f4f4f4">1,37</text>
<text transform="translate(617.0,838.2) scale(0.625,1)" font-size="15.6" fill="#f4f4f4" stroke="#f4f4f4">3,39</text>
<text transform="translate(660.4,838.2) scale(0.625,1)" font-size="15.6" fill="#f4f4f4" stroke="#f4f4f4">3,64</text>
<text transform="translate(704.5,838.2) scale(0.625,1)" font-size="15.6" fill="#f4f4f4" stroke="#f4f4f4">2,33</text>
<text transform="translate(743.5,838.2) scale(0.625,1)" font-size="15.6" fill="#f4f4f4" stroke="#f4f4f4">3,07</text>
<text transform="translate(777.7,838.2) scale(0.625,1)" font-size="15.6" fill="#f4f4f4" stroke="#f4f4f4">3,24</text>
<text transform="translate(831.0,838.2) scale(0.625,1)" font-size="15.6" fill="#f4f4f4" stroke="#f4f4f4">4,93</text>
<text transform="translate(888.0,838.2) scale(0.625,1)" font-size="15.6" fill="#f4f4f4" stroke="#f4f4f4">4,83</text>
<text transform="translate(923.0,838.2) scale(0.625,1)" font-size="15.6" fill="#f4f4f4" stroke="#f4f4f4">3,77</text>
<text transform="translate(981.7,838.2) scale(0.625,1)" font-size="15.6" fill="#f4f4f4" stroke="#f4f4f4">5,53</text>
<text transform="translate(1045.2,838.2) scale(0.625,1)" font-size="15.6" fill="#f4f4f4" stroke="#f4f4f4">4,93</text>
<text transform="translate(1077.0,838.2) scale(0.625,1)" font-size="15.6" fill="#f4f4f4" stroke="#f4f4f4">3,78</text>
<text transform="translate(1136.0,838.2) scale(0.625,1)" font-size="15.6" fill="#f4f4f4" stroke="#f4f4f4">3,29</text>
<text transform="translate(1199.5,838.2) scale(0.625,1)" font-size="15.6" fill="#f4f4f4" stroke="#f4f4f4">5,26</text>
<text transform="translate(1229.2,838.2) scale(0.625,1)" font-size="15.6" fill="#f4f4f4" stroke="#f4f4f4">4,98</text>
<text transform="translate(1259.3,838.2) scale(0.625,1)" font-size="15.6" fill="#f4f4f4" stroke="#f4f4f4">5,67</text>
<text transform="translate(1289.0,838.2) scale(0.625,1)" font-size="15.6" fill="#f4f4f4" stroke="#f4f4f4">2,38</text>
<text transform="translate(1324.6,838.2) scale(0.625,1)" font-size="15.6" fill="#f4f4f4" stroke="#f4f4f4">6,07</text>
<text transform="translate(1366.4,838.2) scale(0.625,1)" font-size="15.6" fill="#f4f4f4" stroke="#f4f4f4">3,55</text>
<text transform="translate(1396.1,838.2) scale(0.625,1)" font-size="15.6" fill="#f4f4f4" stroke="#f4f4f4">5,71</text>
<text transform="translate(1441.7,838.2) scale(0.625,1)" font-size="15.6" fill="#f4f4f4" stroke="#f4f4f4">6,31</text>
<text transform="translate(1496.5,838.2) scale(0.625,1)" font-size="15.6" fill="#f4f4f4" stroke="#f4f4f4">11,97</text>
<text transform="translate(1544.6,838.2) scale(0.625,1)" font-size="15.6" fill="#f4f4f4" stroke="#f4f4f4">5,67</text>
<text transform="translate(1594.4,838.2) scale(0.625,1)" font-size="15.6" fill="#f4f4f4" stroke="#f4f4f4">7,94</text>
<text transform="translate(1660.9,838.2) scale(0.625,1)" font-size="15.6" fill="#f4f4f4" stroke="#f4f4f4">3,31</text>
<text x="1367.5" y="73.0" font-size="15" fill="#cfcfcf" stroke="#cfcfcf" text-anchor="middle" textLength="78.0" lengthAdjust="spacingAndGlyphs">CIE 1931 xy</text>
<rect x="1054.0" y="78.0" width="653.5" height="500.20000000000005" fill="none" stroke="#8c8c8c" stroke-width="1.6"/>
<line x1="1054.2" y1="578.2" x2="1054.2" y2="583.8000000000001" stroke="#ddd" stroke-width="1.3"/>
<text x="1053.8" y="600.4" font-size="15.7" fill="#d8d8d8" stroke="#d8d8d8" text-anchor="middle" textLength="8.3" lengthAdjust="spacingAndGlyphs">0</text>
<line x1="1048.2" y1="578.7" x2="1054.0" y2="578.7" stroke="#ddd" stroke-width="1.3"/>
<text x="1047.6" y="584.2" font-size="15.7" fill="#d8d8d8" stroke="#d8d8d8" text-anchor="end" textLength="8.3" lengthAdjust="spacingAndGlyphs">0</text>
<line x1="1131.9" y1="578.2" x2="1131.9" y2="583.8000000000001" stroke="#ddd" stroke-width="1.3"/>
<text x="1131.5" y="600.4" font-size="15.7" fill="#d8d8d8" stroke="#d8d8d8" text-anchor="middle" textLength="20.6" lengthAdjust="spacingAndGlyphs">0,1</text>
<line x1="1048.2" y1="519.2" x2="1054.0" y2="519.2" stroke="#ddd" stroke-width="1.3"/>
<text x="1047.6" y="524.8" font-size="15.7" fill="#d8d8d8" stroke="#d8d8d8" text-anchor="end" textLength="20.6" lengthAdjust="spacingAndGlyphs">0,1</text>
<line x1="1209.5" y1="578.2" x2="1209.5" y2="583.8000000000001" stroke="#ddd" stroke-width="1.3"/>
<text x="1209.1" y="600.4" font-size="15.7" fill="#d8d8d8" stroke="#d8d8d8" text-anchor="middle" textLength="20.6" lengthAdjust="spacingAndGlyphs">0,2</text>
<line x1="1048.2" y1="459.8" x2="1054.0" y2="459.8" stroke="#ddd" stroke-width="1.3"/>
<text x="1047.6" y="465.3" font-size="15.7" fill="#d8d8d8" stroke="#d8d8d8" text-anchor="end" textLength="20.6" lengthAdjust="spacingAndGlyphs">0,2</text>
<line x1="1287.2" y1="578.2" x2="1287.2" y2="583.8000000000001" stroke="#ddd" stroke-width="1.3"/>
<text x="1286.8" y="600.4" font-size="15.7" fill="#d8d8d8" stroke="#d8d8d8" text-anchor="middle" textLength="20.6" lengthAdjust="spacingAndGlyphs">0,3</text>
<line x1="1048.2" y1="400.4" x2="1054.0" y2="400.4" stroke="#ddd" stroke-width="1.3"/>
<text x="1047.6" y="405.9" font-size="15.7" fill="#d8d8d8" stroke="#d8d8d8" text-anchor="end" textLength="20.6" lengthAdjust="spacingAndGlyphs">0,3</text>
<line x1="1364.8" y1="578.2" x2="1364.8" y2="583.8000000000001" stroke="#ddd" stroke-width="1.3"/>
<text x="1364.4" y="600.4" font-size="15.7" fill="#d8d8d8" stroke="#d8d8d8" text-anchor="middle" textLength="20.6" lengthAdjust="spacingAndGlyphs">0,4</text>
<line x1="1048.2" y1="340.9" x2="1054.0" y2="340.9" stroke="#ddd" stroke-width="1.3"/>
<text x="1047.6" y="346.4" font-size="15.7" fill="#d8d8d8" stroke="#d8d8d8" text-anchor="end" textLength="20.6" lengthAdjust="spacingAndGlyphs">0,4</text>
<line x1="1442.5" y1="578.2" x2="1442.5" y2="583.8000000000001" stroke="#ddd" stroke-width="1.3"/>
<text x="1442.0" y="600.4" font-size="15.7" fill="#d8d8d8" stroke="#d8d8d8" text-anchor="middle" textLength="20.6" lengthAdjust="spacingAndGlyphs">0,5</text>
<line x1="1048.2" y1="281.5" x2="1054.0" y2="281.5" stroke="#ddd" stroke-width="1.3"/>
<text x="1047.6" y="287.0" font-size="15.7" fill="#d8d8d8" stroke="#d8d8d8" text-anchor="end" textLength="20.6" lengthAdjust="spacingAndGlyphs">0,5</text>
<line x1="1520.1" y1="578.2" x2="1520.1" y2="583.8000000000001" stroke="#ddd" stroke-width="1.3"/>
<text x="1519.7" y="600.4" font-size="15.7" fill="#d8d8d8" stroke="#d8d8d8" text-anchor="middle" textLength="20.6" lengthAdjust="spacingAndGlyphs">0,6</text>
<line x1="1048.2" y1="222.0" x2="1054.0" y2="222.0" stroke="#ddd" stroke-width="1.3"/>
<text x="1047.6" y="227.5" font-size="15.7" fill="#d8d8d8" stroke="#d8d8d8" text-anchor="end" textLength="20.6" lengthAdjust="spacingAndGlyphs">0,6</text>
<line x1="1597.8" y1="578.2" x2="1597.8" y2="583.8000000000001" stroke="#ddd" stroke-width="1.3"/>
<text x="1597.3" y="600.4" font-size="15.7" fill="#d8d8d8" stroke="#d8d8d8" text-anchor="middle" textLength="20.6" lengthAdjust="spacingAndGlyphs">0,7</text>
<line x1="1048.2" y1="162.6" x2="1054.0" y2="162.6" stroke="#ddd" stroke-width="1.3"/>
<text x="1047.6" y="168.1" font-size="15.7" fill="#d8d8d8" stroke="#d8d8d8" text-anchor="end" textLength="20.6" lengthAdjust="spacingAndGlyphs">0,7</text>
<line x1="1675.4" y1="578.2" x2="1675.4" y2="583.8000000000001" stroke="#ddd" stroke-width="1.3"/>
<text x="1675.0" y="600.4" font-size="15.7" fill="#d8d8d8" stroke="#d8d8d8" text-anchor="middle" textLength="20.6" lengthAdjust="spacingAndGlyphs">0,8</text>
<line x1="1048.2" y1="103.1" x2="1054.0" y2="103.1" stroke="#ddd" stroke-width="1.3"/>
<text x="1047.6" y="108.6" font-size="15.7" fill="#d8d8d8" stroke="#d8d8d8" text-anchor="end" textLength="20.6" lengthAdjust="spacingAndGlyphs">0,8</text>
<rect x="1357.1" y="354.2" width="13.8" height="13.8" fill="none" stroke="#fff" stroke-width="1.45"/>
<rect x="1341.5" y="358.6" width="13.8" height="13.8" fill="none" stroke="#fff" stroke-width="1.45"/>
<rect x="1240.5" y="411.7" width="13.8" height="13.8" fill="none" stroke="#fff" stroke-width="1.45"/>
<rect x="1311.0" y="316.8" width="13.8" height="13.8" fill="none" stroke="#fff" stroke-width="1.45"/>
<rect x="1254.7" y="420.0" width="13.8" height="13.8" fill="none" stroke="#fff" stroke-width="1.45"/>
<rect x="1250.5" y="355.6" width="13.8" height="13.8" fill="none" stroke="#fff" stroke-width="1.45"/>
<rect x="1445.5" y="329.1" width="13.8" height="13.8" fill="none" stroke="#fff" stroke-width="1.45"/>
<rect x="1215.5" y="456.5" width="13.8" height="13.8" fill="none" stroke="#fff" stroke-width="1.45"/>
<rect x="1405.9" y="383.5" width="13.8" height="13.8" fill="none" stroke="#fff" stroke-width="1.45"/>
<rect x="1271.5" y="438.3" width="13.8" height="13.8" fill="none" stroke="#fff" stroke-width="1.45"/>
<rect x="1339.0" y="277.0" width="13.8" height="13.8" fill="none" stroke="#fff" stroke-width="1.45"/>
<rect x="1414.5" y="309.5" width="13.8" height="13.8" fill="none" stroke="#fff" stroke-width="1.45"/>
<rect x="1196.0" y="486.0" width="13.8" height="13.8" fill="none" stroke="#fff" stroke-width="1.45"/>
<rect x="1284.1" y="278.6" width="13.8" height="13.8" fill="none" stroke="#fff" stroke-width="1.45"/>
<rect x="1463.5" y="380.9" width="13.8" height="13.8" fill="none" stroke="#fff" stroke-width="1.45"/>
<rect x="1393.6" y="288.4" width="13.8" height="13.8" fill="none" stroke="#fff" stroke-width="1.45"/>
<rect x="1337.5" y="423.0" width="13.8" height="13.8" fill="none" stroke="#fff" stroke-width="1.45"/>
<rect x="1208.4" y="410.5" width="13.8" height="13.8" fill="none" stroke="#fff" stroke-width="1.45"/>
<rect x="1543.6" y="374.0" width="13.8" height="13.8" fill="none" stroke="#fff" stroke-width="1.45"/>
<rect x="1280.2" y="212.6" width="13.8" height="13.8" fill="none" stroke="#fff" stroke-width="1.45"/>
<rect x="1163.5" y="535.0" width="13.8" height="13.8" fill="none" stroke="#fff" stroke-width="1.45"/>
<rect x="1221.0" y="375.1" width="13.8" height="13.8" fill="none" stroke="#fff" stroke-width="1.45"/>
<rect x="1295.6" y="479.1" width="13.8" height="13.8" fill="none" stroke="#fff" stroke-width="1.45"/>
<rect x="1372.6" y="270.0" width="13.8" height="13.8" fill="none" stroke="#fff" stroke-width="1.45"/>
<rect x="1290.0" y="374.1" width="13.8" height="13.8" fill="#fff" fill-opacity=".55" stroke="#000" stroke-width="1.9"/>
<circle cx="1297.5" cy="380.5" r="4.1" fill="#8e8e8e" stroke="#0a0a0a" stroke-width="1.3"/>
<circle cx="1296.4" cy="381.2" r="4.1" fill="#969696" stroke="#0a0a0a" stroke-width="1.3"/>
<circle cx="1294.9" cy="382.1" r="4.1" fill="#a0a0a0" stroke="#0a0a0a" stroke-width="1.3"/>
<circle cx="1262.9" cy="392.0" r="4.1" fill="#000" stroke="#0a0a0a" stroke-width="1.3"/>
<circle cx="1349.9" cy="360.9" r="4.1" fill="rgb(115,82,68)" stroke="#0a0a0a" stroke-width="1.3"/>
<circle cx="1337.5" cy="364.9" r="4.1" fill="rgb(194,150,130)" stroke="#0a0a0a" stroke-width="1.3"/>
<circle cx="1254.9" cy="414.4" r="4.1" fill="rgb(98,122,157)" stroke="#0a0a0a" stroke-width="1.3"/>
<circle cx="1320.8" cy="333.0" r="4.1" fill="rgb(87,108,67)" stroke="#0a0a0a" stroke-width="1.3"/>
<circle cx="1263.1" cy="419.9" r="4.1" fill="rgb(133,128,177)" stroke="#0a0a0a" stroke-width="1.3"/>
<circle cx="1270.0" cy="367.9" r="4.1" fill="rgb(103,189,170)" stroke="#0a0a0a" stroke-width="1.3"/>
<circle cx="1423.0" cy="332.1" r="4.1" fill="rgb(214,126,44)" stroke="#0a0a0a" stroke-width="1.3"/>
<circle cx="1229.4" cy="449.2" r="4.1" fill="rgb(80,91,166)" stroke="#0a0a0a" stroke-width="1.3"/>
<circle cx="1381.1" cy="382.0" r="4.1" fill="rgb(193,90,99)" stroke="#0a0a0a" stroke-width="1.3"/>
<circle cx="1273.1" cy="432.8" r="4.1" fill="rgb(94,60,108)" stroke="#0a0a0a" stroke-width="1.3"/>
<circle cx="1350.0" cy="297.8" r="4.1" fill="rgb(157,188,64)" stroke="#0a0a0a" stroke-width="1.3"/>
<circle cx="1405.0" cy="317.6" r="4.1" fill="rgb(224,163,46)" stroke="#0a0a0a" stroke-width="1.3"/>
<circle cx="1211.0" cy="474.9" r="4.1" fill="rgb(56,61,150)" stroke="#0a0a0a" stroke-width="1.3"/>
<circle cx="1307.0" cy="306.5" r="4.1" fill="rgb(70,148,73)" stroke="#0a0a0a" stroke-width="1.3"/>
<circle cx="1427.0" cy="376.3" r="4.1" fill="rgb(175,54,60)" stroke="#0a0a0a" stroke-width="1.3"/>
<circle cx="1391.9" cy="301.9" r="4.1" fill="rgb(231,199,31)" stroke="#0a0a0a" stroke-width="1.3"/>
<circle cx="1323.4" cy="418.9" r="4.1" fill="rgb(187,86,149)" stroke="#0a0a0a" stroke-width="1.3"/>
<circle cx="1229.5" cy="414.4" r="4.1" fill="rgb(8,133,161)" stroke="#0a0a0a" stroke-width="1.3"/>
<circle cx="1498.9" cy="363.9" r="4.1" fill="#f00" stroke="#0a0a0a" stroke-width="1.3"/>
<circle cx="1314.9" cy="247.5" r="4.1" fill="#0f0" stroke="#0a0a0a" stroke-width="1.3"/>
<circle cx="1174.9" cy="517.9" r="4.1" fill="#00f" stroke="#0a0a0a" stroke-width="1.3"/>
<circle cx="1243.4" cy="384.9" r="4.1" fill="#0ff" stroke="#0a0a0a" stroke-width="1.3"/>
<circle cx="1285.5" cy="465.8" r="4.1" fill="#f0f" stroke="#0a0a0a" stroke-width="1.3"/>
<circle cx="1379.5" cy="288.1" r="4.1" fill="#ff0" stroke="#0a0a0a" stroke-width="1.3"/>
<rect x="1510.2" y="85" width="190.8" height="147.6" fill="none" stroke="#8a8a8a" stroke-width="1.3"/>
<rect x="1597.5" y="151.4" width="14.4" height="14.2" fill="none" stroke="#fff" stroke-width="1.45"/>
<circle cx="1603.8" cy="216.2" r="4.3" fill="#ff0" stroke="#0a0a0a" stroke-width="1.4"/>
<rect x="1423.6" y="538.2" width="280.4" height="27.4" fill="#333"/>
<text x="1455.0" y="559.5" font-size="20" fill="#f2f2f2" stroke="#f2f2f2" text-anchor="start" textLength="218.5" lengthAdjust="spacingAndGlyphs">RGB Triplet: 255, 255, 0</text>
</svg></body></html>
